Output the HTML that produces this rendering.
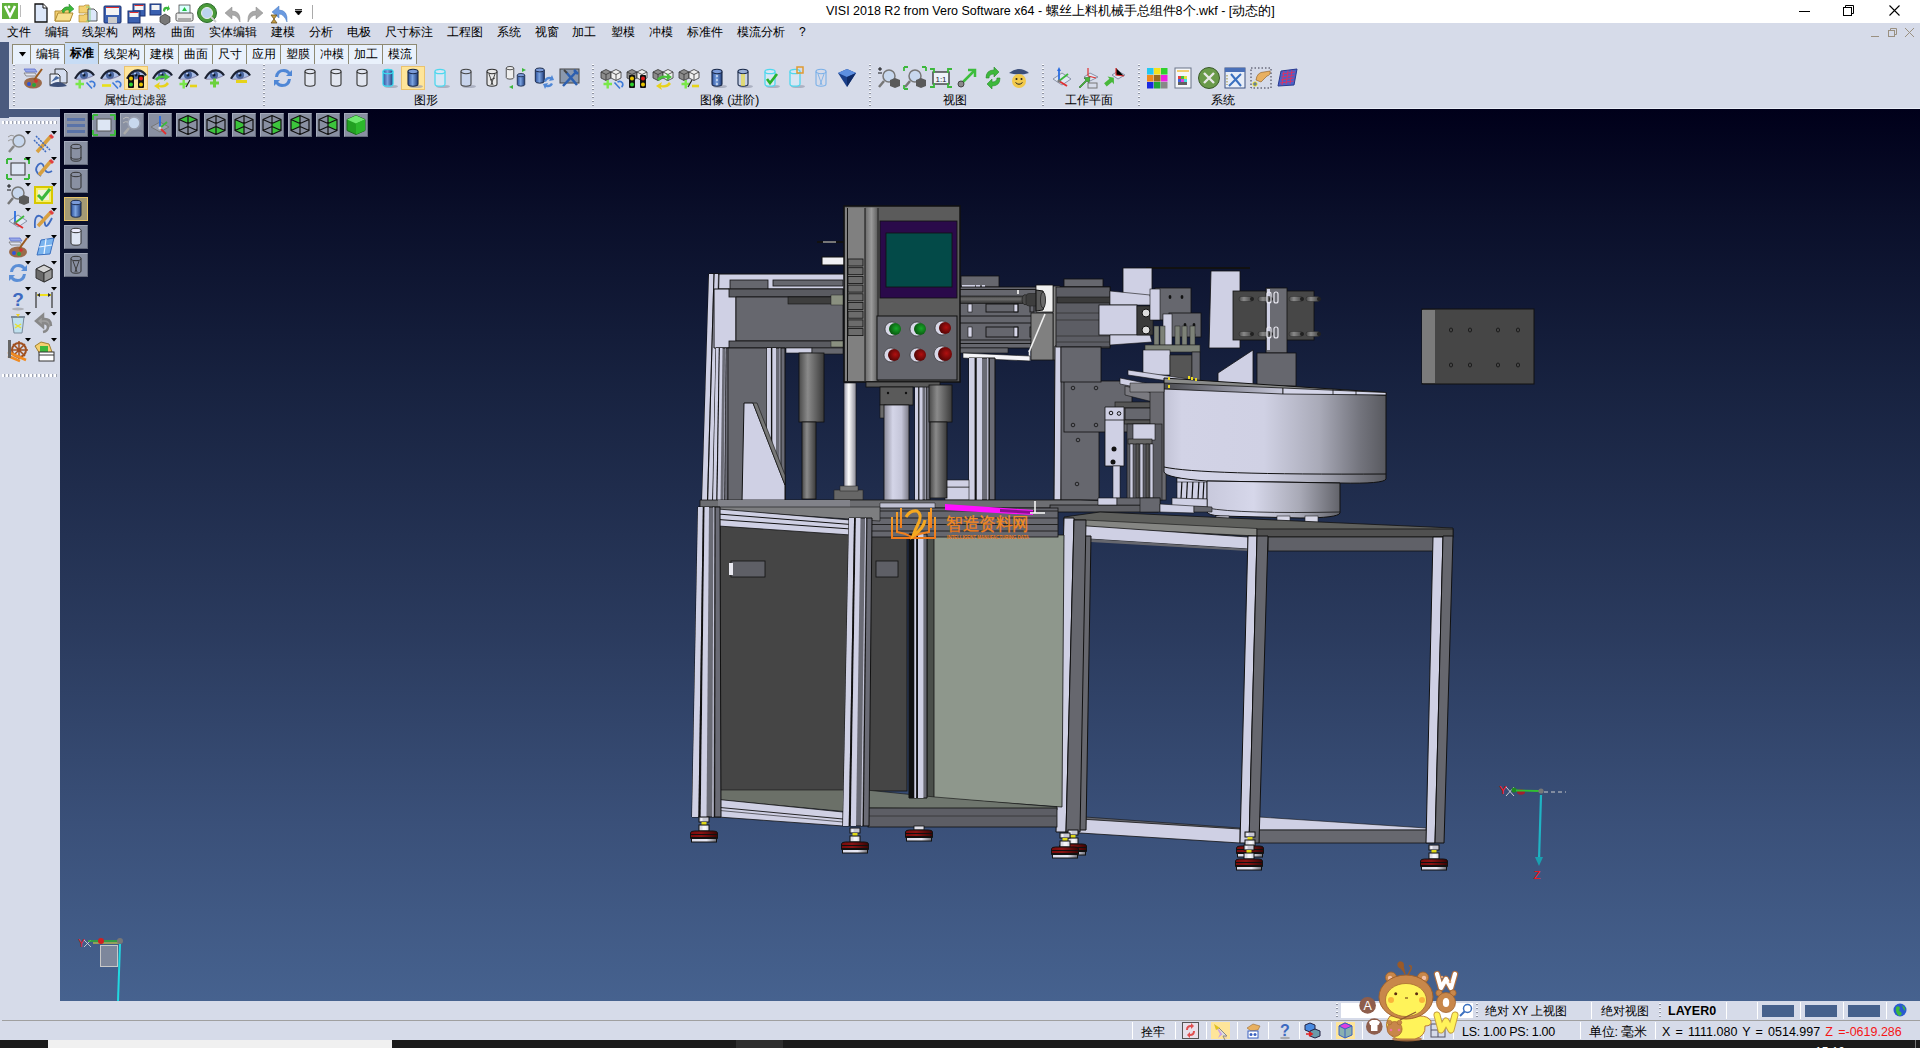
<!DOCTYPE html><html><head><meta charset="utf-8"><style>
*{box-sizing:border-box;margin:0;padding:0}
html,body{width:1920px;height:1048px;overflow:hidden;background:#d6dbe9;font-family:"Liberation Sans",sans-serif;font-size:12px;color:#000}
.a{position:absolute}
.m{position:absolute;top:24px;font-size:12px;line-height:16px;white-space:nowrap}
.tab{position:absolute;top:44px;height:20px;border:1px solid #8e8a73;border-bottom:none;border-left:none;background:#e9f1fc;font-size:12px;line-height:19px;text-align:center;white-space:nowrap}
.dsep{position:absolute;width:2px;background-image:linear-gradient(#fafbfd 0,#fafbfd 1.5px,#8d92a0 1.5px,#8d92a0 2.5px,transparent 2.5px);background-size:2px 4px}
.lbl{position:absolute;top:93px;font-size:12px;line-height:14px;white-space:nowrap}
.st{position:absolute;font-size:12px;line-height:16px;white-space:nowrap}
.ss{position:absolute;width:1px;height:17px;background:#a3a8b4;border-right:1px solid #fff}
svg{position:absolute;overflow:visible}
</style></head><body><div class="a" style="left:0;top:0;width:1920px;height:23px;background:#fff"></div><div class="a" style="left:0;top:42px;width:9px;height:76px;background:#4a5a7e"></div><div class="a" style="left:0;top:109px;width:60px;height:8px;background:#4a5a7e"></div><div class="a" style="left:60px;top:109px;width:1860px;height:892px;background:linear-gradient(#00001a 0%,#0a0f2a 12%,#182341 32%,#2a3a5d 58%,#3a5079 80%,#46628f 100%)"></div><div class="a" style="left:0;top:1040px;width:1920px;height:8px;background:#1b1b1b"></div><div class="a" style="left:48px;top:1040px;width:344px;height:8px;background:#f0f0f0"></div><div class="a" style="left:736px;top:1040px;width:47px;height:8px;background:#2e2e2e"></div><div class="a" style="left:1800px;top:1040px;width:120px;height:8px;overflow:hidden"><div class="a" style="left:15px;top:5px;font-size:12px;line-height:14px;color:#fff">15:10</div><div class="a" style="left:115px;top:0;width:1px;height:8px;background:#777"></div></div><div class="a" style="left:2px;top:1020px;width:1918px;height:1px;background:#a0a0a0"></div><div class="a" style="left:0;top:0;width:1920px;height:23px;"><svg style="left:2px;top:3px" width="16" height="16" viewBox="0 0 16 16"><rect width="16" height="16" fill="#5fb13a"/><path d="M3 3 L8 13 L13 3" stroke="#fff" stroke-width="2.6" fill="none"/><circle cx="7" cy="4" r="1.4" fill="#fff"/></svg><div class="a" style="left:20px;top:5px;width:1px;height:12px;background:#bbb"></div><div class="a" style="left:312px;top:5px;width:1px;height:14px;background:#aaa"></div><svg style="left:32px;top:3px" width="22" height="22" viewBox="0 0 22 22"><path d="M3 1 H11 L15 5 V19 H3Z" fill="#dde8fa" stroke="#111" stroke-width="1.3"/><path d="M11 1 V5 H15" fill="#fff" stroke="#111"/></svg><svg style="left:54px;top:3px" width="22" height="22" viewBox="0 0 22 22"><path d="M1 8 H7 L9 6 H16 V18 H1Z" fill="#f4d070" stroke="#b08a30"/><path d="M1 18 L4 10 H19 L16 18Z" fill="#f8e090" stroke="#b08a30"/><path d="M8 9 Q9 3 15 4 L15 1 L20 6 L15 10 V7 Q11 6 10 10Z" fill="#3cb83c" stroke="#2a7a2a" stroke-width=".5"/></svg><svg style="left:78px;top:3px" width="22" height="22" viewBox="0 0 22 22"><path d="M1 3 H6 L7 2 H11 V10 H1Z" fill="#f4d070" stroke="#b08a30" stroke-width=".7"/><path d="M1 12 H6 L7 11 H11 V19 H1Z" fill="#f4d070" stroke="#b08a30" stroke-width=".7"/><path d="M10 6 H16 L19 9 V18 H10Z" fill="#dde8fa" stroke="#333" stroke-width=".8"/><path d="M8 4 H12 V18 H8" stroke="#7ad07a" fill="none" stroke-width=".8"/></svg><svg style="left:103px;top:3px" width="22" height="22" viewBox="0 0 22 22"><rect x="1" y="3" width="17" height="17" rx="1" fill="#3a60b0" stroke="#1a3070"/><rect x="3" y="4" width="13" height="8" fill="#f4f4f4"/><path d="M3 4.5 H16" stroke="#e03030"/><rect x="5" y="14" width="9" height="6" fill="#ccc"/></svg><svg style="left:127px;top:3px" width="22" height="22" viewBox="0 0 22 22"><rect x="6" y="1" width="12" height="12" fill="#3a60b0" stroke="#1a3070"/><rect x="7.5" y="2" width="9" height="5" fill="#f4f4f4"/><rect x="1" y="8" width="12" height="12" fill="#3a60b0" stroke="#1a3070"/><rect x="2.5" y="9" width="9" height="5" fill="#f4f4f4"/><path d="M2.5 9.5 H11.5 M7.5 2.5 H16.5" stroke="#e03030"/></svg><svg style="left:149px;top:3px" width="22" height="22" viewBox="0 0 22 22"><rect x="1" y="1" width="11" height="11" fill="#3a60b0" stroke="#1a3070"/><rect x="2.5" y="2" width="8" height="5" fill="#f4f4f4"/><path d="M11 14 L16 11 L21 14 V19 L16 22 L11 19Z" fill="#777" stroke="#333" stroke-width=".7"/><path d="M14 8 Q14 3 19 4 L19 2 L21 6 L18 8 V6 Q16 6 16 9Z" fill="#3cb83c"/></svg><svg style="left:175px;top:3px" width="22" height="22" viewBox="0 0 22 22"><rect x="4" y="2" width="11" height="9" fill="#dff" stroke="#333" stroke-width=".7"/><path d="M7 8 L9.5 4 L12 8Z" fill="#20c040"/><rect x="1" y="10" width="17" height="8" rx="1.5" fill="#e8e8e8" stroke="#555"/><rect x="3" y="15" width="13" height="3" fill="#aaa"/></svg><svg style="left:197px;top:3px" width="22" height="22" viewBox="0 0 22 22"><circle cx="10" cy="10" r="9.5" fill="#4a9a3a" stroke="#2a6a2a"/><circle cx="10" cy="10" r="5.5" fill="#bcd4ee" stroke="#eee"/><path d="M14 14 L19 19" stroke="#ccc" stroke-width="2"/></svg><svg style="left:224px;top:3px" width="22" height="22" viewBox="0 0 22 22"><path d="M16 19 Q17 8 8 8 V4 L1 10 L8 16 V12 Q13 12 16 19Z" fill="#a8a8a8" stroke="#888" stroke-width=".5"/></svg><svg style="left:247px;top:3px" width="22" height="22" viewBox="0 0 22 22"><path d="M1 19 Q0 8 9 8 V4 L16 10 L9 16 V12 Q4 12 1 19Z" fill="#a8a8a8" stroke="#888" stroke-width=".5"/></svg><svg style="left:269px;top:3px" width="22" height="22" viewBox="0 0 22 22"><path d="M18 19 Q19 7 10 7 V3 L3 9 L10 15 V11 Q15 11 18 19Z" fill="#6a9ae0" stroke="#4a7ac0" stroke-width=".5"/><path d="M2 12 H8 L5 16 L8 20 H2 L5 16Z" fill="#c8a040" stroke="#6a5020" stroke-width=".8"/></svg><svg style="left:295px;top:9px" width="8" height="7"><path d="M0 .5 H7 M0 2 H7 L3.5 6Z" fill="#000" stroke="#000" stroke-width=".8"/></svg><div class="a" style="left:826px;top:4px;font-size:12.5px;line-height:15px;white-space:nowrap;color:#000">VISI 2018 R2 from Vero Software x64 - 螺丝上料机械手总组件8个.wkf - [动态的]</div><svg style="left:1799px;top:6px" width="12" height="12"><line x1="0" y1="5.5" x2="11" y2="5.5" stroke="#000" stroke-width="1"/></svg><svg style="left:1843px;top:5px" width="12" height="12"><rect x="0.5" y="2.5" width="8" height="8" fill="none" stroke="#000"/><path d="M2.5 2.5 V0.5 H10.5 V8.5 H8.5" fill="none" stroke="#000"/></svg><svg style="left:1889px;top:5px" width="12" height="12"><path d="M0.5 0.5 L10.5 10.5 M10.5 0.5 L0.5 10.5" stroke="#000" stroke-width="1.1"/></svg></div><div class="m" style="left:7px">文件</div><div class="m" style="left:45px">编辑</div><div class="m" style="left:82px">线架构</div><div class="m" style="left:132px">网格</div><div class="m" style="left:171px">曲面</div><div class="m" style="left:209px">实体编辑</div><div class="m" style="left:271px">建模</div><div class="m" style="left:309px">分析</div><div class="m" style="left:347px">电极</div><div class="m" style="left:385px">尺寸标注</div><div class="m" style="left:447px">工程图</div><div class="m" style="left:497px">系统</div><div class="m" style="left:535px">视窗</div><div class="m" style="left:572px">加工</div><div class="m" style="left:611px">塑模</div><div class="m" style="left:649px">冲模</div><div class="m" style="left:687px">标准件</div><div class="m" style="left:737px">模流分析</div><div class="m" style="left:799px">?</div><svg style="left:1869px;top:27px" width="50" height="12"><line x1="2" y1="9.5" x2="10" y2="9.5" stroke="#9a9080"/><rect x="19.5" y="3.5" width="6" height="6" fill="none" stroke="#9a9080"/><path d="M21.5 3.5 V1.5 H27.5 V7.5 H25.5" fill="none" stroke="#9a9080"/><path d="M36 1 L45 10 M45 1 L36 10" stroke="#9a9080"/></svg><div class="a" style="left:12px;top:44px;width:1px;height:20px;background:#8e8a73"></div><div class="tab" style="left:13px;width:18px"><svg style="left:6px;top:7px" width="8" height="5"><path d="M0 0 H7 L3.5 4.5Z" fill="#000"/></svg></div><div class="tab" style="left:31px;width:34px">编辑</div><div class="tab" style="left:65px;width:34px;top:42px;height:22px;background:#c7dcf5;font-weight:bold;line-height:21px">标准</div><div class="tab" style="left:99px;width:46px">线架构</div><div class="tab" style="left:145px;width:34px">建模</div><div class="tab" style="left:179px;width:34px">曲面</div><div class="tab" style="left:213px;width:34px">尺寸</div><div class="tab" style="left:247px;width:34px">应用</div><div class="tab" style="left:281px;width:34px">塑膜</div><div class="tab" style="left:315px;width:34px">冲模</div><div class="tab" style="left:349px;width:34px">加工</div><div class="tab" style="left:383px;width:34px">模流</div><div class="dsep" style="left:13px;top:64px;height:44px"></div><div class="dsep" style="left:263px;top:64px;height:44px"></div><div class="dsep" style="left:592px;top:64px;height:44px"></div><div class="dsep" style="left:869px;top:64px;height:44px"></div><div class="dsep" style="left:1042px;top:64px;height:44px"></div><div class="dsep" style="left:1138px;top:64px;height:44px"></div><div class="lbl" style="left:104px">属性/过滤器</div><div class="lbl" style="left:414px">图形</div><div class="lbl" style="left:700px">图像 (进阶)</div><div class="lbl" style="left:943px">视图</div><div class="lbl" style="left:1065px">工作平面</div><div class="lbl" style="left:1211px">系统</div><div class="a" style="left:9px;top:108px;width:1911px;height:1px;background:#eaeef8"></div><div class="a" style="left:124px;top:66px;width:24px;height:24px;background:#fee59a;border:1px solid #ebc36e"></div><div class="a" style="left:401px;top:66px;width:24px;height:24px;background:#fee59a;border:1px solid #ebc36e"></div><svg style="left:21px;top:66px" width="24" height="24" viewBox="0 0 24 24"><path d="M3 3 H14 L16 6 H5Z" fill="#98a9e8" stroke="#5d6fd0" stroke-width=".8"/><path d="M3 7 H14 L16 10 H5Z" fill="#dfe3f0" stroke="#777" stroke-width=".8"/><ellipse cx="12" cy="17" rx="9" ry="5.5" fill="#9a6a4a"/><circle cx="8" cy="18" r="2" fill="#2f55d8"/><circle cx="13" cy="19" r="2" fill="#28a838"/><circle cx="15" cy="15" r="1.8" fill="#d83030"/><path d="M13 14 L21 3" stroke="#9a5a20" stroke-width="2"/></svg><svg style="left:46px;top:66px" width="24" height="24" viewBox="0 0 24 24"><path d="M9 3 H18 L21 6 V17 H9Z" fill="#d5def0" stroke="#333" stroke-width="1"/><path d="M4 8 H12 L14 10 V19 H4Z" fill="#e5ebf7" stroke="#333" stroke-width="1"/><path d="M5 16 L10 10 L14 12" fill="#4a6aa0"/><path d="M3 20 Q12 12 21 20 Q12 22 3 20Z" fill="#3b4e78"/></svg><svg style="left:72px;top:66px" width="24" height="24" viewBox="0 0 24 24"><path d="M3.5 13 Q8 5 14 5 Q19 5.5 21.5 9.5 Q18 13 12 13.5Z" fill="#a8bde6"/><circle cx="12" cy="9" r="4" fill="#4a66a0"/><circle cx="12" cy="9" r="1.5" fill="#0e1a30"/><circle cx="11" cy="7.5" r=".9" fill="#cfe0ff"/><path d="M3 12.8 Q7.5 4 14 4.3 Q19.5 4.8 22 9.5" stroke="#1c2232" stroke-width="2.2" fill="none"/><path d="M4 13.3 Q12 14.5 21 10" stroke="#7a6a8a" stroke-width=".6" fill="none"/><path d="M3.5 18 H12 M7.7 14 V22.5" stroke="#7ae84a" stroke-width="2.4"/><path d="M14.5 16.5 L20 22.5" stroke="#3d7ad8" stroke-width="1.6"/><path d="M17.5 16 Q20.5 14.5 22.5 17 Q23.5 19.5 21.5 21" stroke="#3d7ad8" stroke-width="1.6" fill="none"/></svg><svg style="left:98px;top:66px" width="24" height="24" viewBox="0 0 24 24"><path d="M3.5 13 Q8 5 14 5 Q19 5.5 21.5 9.5 Q18 13 12 13.5Z" fill="#a8bde6"/><circle cx="12" cy="9" r="4" fill="#4a66a0"/><circle cx="12" cy="9" r="1.5" fill="#0e1a30"/><circle cx="11" cy="7.5" r=".9" fill="#cfe0ff"/><path d="M3 12.8 Q7.5 4 14 4.3 Q19.5 4.8 22 9.5" stroke="#1c2232" stroke-width="2.2" fill="none"/><path d="M4 13.3 Q12 14.5 21 10" stroke="#7a6a8a" stroke-width=".6" fill="none"/><path d="M4 19.5 H13" stroke="#e8e01a" stroke-width="2.6"/><path d="M14.5 16.5 L20 22.5" stroke="#3d7ad8" stroke-width="1.6"/><path d="M17.5 16 Q20.5 14.5 22.5 17 Q23.5 19.5 21.5 21" stroke="#3d7ad8" stroke-width="1.6" fill="none"/></svg><svg style="left:124px;top:66px" width="24" height="24" viewBox="0 0 24 24"><path d="M3.5 13 Q8 5 14 5 Q19 5.5 21.5 9.5 Q18 13 12 13.5Z" fill="#a8bde6"/><circle cx="12" cy="9" r="4" fill="#4a66a0"/><circle cx="12" cy="9" r="1.5" fill="#0e1a30"/><circle cx="11" cy="7.5" r=".9" fill="#cfe0ff"/><path d="M3 12.8 Q7.5 4 14 4.3 Q19.5 4.8 22 9.5" stroke="#1c2232" stroke-width="2.2" fill="none"/><path d="M4 13.3 Q12 14.5 21 10" stroke="#7a6a8a" stroke-width=".6" fill="none"/><rect x="4" y="9" width="6" height="13" rx="1" fill="#111"/><rect x="14" y="9" width="6" height="13" rx="1" fill="#111"/><circle cx="7" cy="12.5" r="2" fill="#e8c400"/><circle cx="7" cy="18.5" r="2" fill="#2fd12c"/><circle cx="17" cy="12.5" r="2" fill="#e21a1a"/><circle cx="17" cy="18.5" r="2" fill="#e8c400"/></svg><svg style="left:150px;top:66px" width="24" height="24" viewBox="0 0 24 24"><path d="M3.5 13 Q8 5 14 5 Q19 5.5 21.5 9.5 Q18 13 12 13.5Z" fill="#a8bde6"/><circle cx="12" cy="9" r="4" fill="#4a66a0"/><circle cx="12" cy="9" r="1.5" fill="#0e1a30"/><circle cx="11" cy="7.5" r=".9" fill="#cfe0ff"/><path d="M3 12.8 Q7.5 4 14 4.3 Q19.5 4.8 22 9.5" stroke="#1c2232" stroke-width="2.2" fill="none"/><path d="M4 13.3 Q12 14.5 21 10" stroke="#7a6a8a" stroke-width=".6" fill="none"/><path d="M5 13 Q9 8 15 10 L14 7 L20 11 L14 15 L15 12 Q10 11 7 15Z" fill="#49c23a"/><path d="M19 18 Q15 23 9 21 L10 24 L4 20 L10 16 L9 19 Q14 20 17 16Z" fill="#e8d21c"/></svg><svg style="left:176px;top:66px" width="24" height="24" viewBox="0 0 24 24"><path d="M3.5 13 Q8 5 14 5 Q19 5.5 21.5 9.5 Q18 13 12 13.5Z" fill="#a8bde6"/><circle cx="12" cy="9" r="4" fill="#4a66a0"/><circle cx="12" cy="9" r="1.5" fill="#0e1a30"/><circle cx="11" cy="7.5" r=".9" fill="#cfe0ff"/><path d="M3 12.8 Q7.5 4 14 4.3 Q19.5 4.8 22 9.5" stroke="#1c2232" stroke-width="2.2" fill="none"/><path d="M4 13.3 Q12 14.5 21 10" stroke="#7a6a8a" stroke-width=".6" fill="none"/><path d="M3.5 18 H12 M7.7 14 V22.5" stroke="#7ae84a" stroke-width="2.4"/><path d="M10 21 L14 14" stroke="#222" stroke-width="1.2"/><path d="M14 20 H21" stroke="#e6d31a" stroke-width="2.6"/></svg><svg style="left:202px;top:66px" width="24" height="24" viewBox="0 0 24 24"><path d="M3.5 13 Q8 5 14 5 Q19 5.5 21.5 9.5 Q18 13 12 13.5Z" fill="#a8bde6"/><circle cx="12" cy="9" r="4" fill="#4a66a0"/><circle cx="12" cy="9" r="1.5" fill="#0e1a30"/><circle cx="11" cy="7.5" r=".9" fill="#cfe0ff"/><path d="M3 12.8 Q7.5 4 14 4.3 Q19.5 4.8 22 9.5" stroke="#1c2232" stroke-width="2.2" fill="none"/><path d="M4 13.3 Q12 14.5 21 10" stroke="#7a6a8a" stroke-width=".6" fill="none"/><path d="M8 17 H17 M12.5 12.5 V21.5" stroke="#6cd13c" stroke-width="3"/></svg><svg style="left:228px;top:66px" width="24" height="24" viewBox="0 0 24 24"><path d="M3.5 13 Q8 5 14 5 Q19 5.5 21.5 9.5 Q18 13 12 13.5Z" fill="#a8bde6"/><circle cx="12" cy="9" r="4" fill="#4a66a0"/><circle cx="12" cy="9" r="1.5" fill="#0e1a30"/><circle cx="11" cy="7.5" r=".9" fill="#cfe0ff"/><path d="M3 12.8 Q7.5 4 14 4.3 Q19.5 4.8 22 9.5" stroke="#1c2232" stroke-width="2.2" fill="none"/><path d="M4 13.3 Q12 14.5 21 10" stroke="#7a6a8a" stroke-width=".6" fill="none"/><path d="M8 15.5 H19" stroke="#e6d31a" stroke-width="3"/></svg><svg style="left:271px;top:66px" width="24" height="24" viewBox="0 0 24 24"><path d="M4 11 Q5 3 13 3 Q17 3 19 6 L21 4 V10 H15 L17 8 Q15 6 12 6 Q8 6 7 11Z" fill="#4f87d6"/><path d="M20 13 Q19 21 11 21 Q7 21 5 18 L3 20 V14 H9 L7 16 Q9 18 12 18 Q16 18 17 13Z" fill="#4f87d6"/></svg><svg style="left:298px;top:66px" width="24" height="24" viewBox="0 0 24 24"><path d="M7 5.5 V18 A5 2.2 0 0 0 17 18 V5.5" fill="#e2e6f0" stroke="#333" stroke-width="1.1"/><ellipse cx="12" cy="5.5" rx="5" ry="2.2" fill="#e2e6f0" stroke="#333" stroke-width="1.1"/></svg><svg style="left:324px;top:66px" width="24" height="24" viewBox="0 0 24 24"><path d="M7 5.5 V18 A5 2.2 0 0 0 17 18 V5.5" fill="#e2e6f0" stroke="#333" stroke-width="1.1"/><ellipse cx="12" cy="5.5" rx="5" ry="2.2" fill="#e2e6f0" stroke="#333" stroke-width="1.1"/></svg><svg style="left:350px;top:66px" width="24" height="24" viewBox="0 0 24 24"><path d="M7 5.5 V18 A5 2.2 0 0 0 17 18 V5.5" fill="#e2e6f0" stroke="#333" stroke-width="1.1"/><ellipse cx="12" cy="5.5" rx="5" ry="2.2" fill="#e2e6f0" stroke="#333" stroke-width="1.1"/></svg><svg style="left:376px;top:66px" width="24" height="24" viewBox="0 0 24 24"><defs><linearGradient id="bc" x1="0" x2="1"><stop offset="0" stop-color="#2b4f9a"/><stop offset=".45" stop-color="#7ba3e0"/><stop offset="1" stop-color="#1e3b7a"/></linearGradient></defs><ellipse cx="15" cy="20.5" rx="7" ry="1.6" fill="#9aa0b0" opacity=".7"/><path d="M7 5.5 V18 A5 2.2 0 0 0 17 18 V5.5" fill="url(#bc)" stroke="#3ad8ee" stroke-width="1.3"/><ellipse cx="12" cy="5.5" rx="5" ry="2.2" fill="url(#bc)" stroke="#3ad8ee" stroke-width="1.3"/></svg><svg style="left:401px;top:66px" width="24" height="24" viewBox="0 0 24 24"><defs><linearGradient id="bc" x1="0" x2="1"><stop offset="0" stop-color="#2b4f9a"/><stop offset=".45" stop-color="#7ba3e0"/><stop offset="1" stop-color="#1e3b7a"/></linearGradient></defs><ellipse cx="15" cy="20.5" rx="7" ry="1.6" fill="#9aa0b0" opacity=".7"/><path d="M7 5.5 V18 A5 2.2 0 0 0 17 18 V5.5" fill="url(#bc)" stroke="#1b2a4a" stroke-width="1.1"/><ellipse cx="12" cy="5.5" rx="5" ry="2.2" fill="#7a9ad8" stroke="#1b2a4a" stroke-width="1.1"/></svg><svg style="left:428px;top:66px" width="24" height="24" viewBox="0 0 24 24"><ellipse cx="15" cy="20.5" rx="7" ry="1.6" fill="#9aa0b0" opacity=".7"/><path d="M7 5.5 V18 A5 2.2 0 0 0 17 18 V5.5" fill="#d8e6f4" stroke="#4fd8ee" stroke-width="1.3"/><ellipse cx="12" cy="5.5" rx="5" ry="2.2" fill="#d8e6f4" stroke="#4fd8ee" stroke-width="1.3"/></svg><svg style="left:454px;top:66px" width="24" height="24" viewBox="0 0 24 24"><ellipse cx="15" cy="20.5" rx="7" ry="1.6" fill="#9aa0b0" opacity=".7"/><path d="M7 5.5 V18 A5 2.2 0 0 0 17 18 V5.5" fill="#c8d4ec" stroke="#444" stroke-width="1.1"/><ellipse cx="12" cy="5.5" rx="5" ry="2.2" fill="#c8d4ec" stroke="#444" stroke-width="1.1"/></svg><svg style="left:480px;top:66px" width="24" height="24" viewBox="0 0 24 24"><path d="M7 5.5 V18 A5 2.2 0 0 0 17 18 V5.5" fill="#e8e8e8" stroke="#333" stroke-width="1.1"/><ellipse cx="12" cy="5.5" rx="5" ry="2.2" fill="#e8e8e8" stroke="#333" stroke-width="1.1"/><path d="M9 8 L13 19 M15 8 L11 19 M10 14 L15 12" stroke="#333" stroke-width=".9"/></svg><svg style="left:505px;top:66px" width="24" height="24" viewBox="0 0 24 24"><g transform="translate(-4,-2) scale(.75)"><path d="M7 5.5 V18 A5 2.2 0 0 0 17 18 V5.5" fill="#eee" stroke="#333" stroke-width="1.1"/><ellipse cx="12" cy="5.5" rx="5" ry="2.2" fill="#eee" stroke="#333" stroke-width="1.1"/></g><defs><linearGradient id="bc" x1="0" x2="1"><stop offset="0" stop-color="#2b4f9a"/><stop offset=".45" stop-color="#7ba3e0"/><stop offset="1" stop-color="#1e3b7a"/></linearGradient></defs><g transform="translate(7,5) scale(.75)"><path d="M7 5.5 V18 A5 2.2 0 0 0 17 18 V5.5" fill="url(#bc)" stroke="#1b2a4a" stroke-width="1.1"/><ellipse cx="12" cy="5.5" rx="5" ry="2.2" fill="#7a9ad8" stroke="#1b2a4a" stroke-width="1.1"/></g><path d="M17 2 L21 4 L17 6Z M4 21 L8 19 V23Z" fill="#3cb83c"/></svg><svg style="left:532px;top:66px" width="24" height="24" viewBox="0 0 24 24"><defs><linearGradient id="bc" x1="0" x2="1"><stop offset="0" stop-color="#2b4f9a"/><stop offset=".45" stop-color="#7ba3e0"/><stop offset="1" stop-color="#1e3b7a"/></linearGradient></defs><g transform="translate(-3,-1) scale(.9)"><path d="M7 5.5 V18 A5 2.2 0 0 0 17 18 V5.5" fill="url(#bc)" stroke="#1b2a4a" stroke-width="1.1"/><ellipse cx="12" cy="5.5" rx="5" ry="2.2" fill="#7a9ad8" stroke="#1b2a4a" stroke-width="1.1"/></g><path d="M12 15 Q14 10 19 11 L20 9 L22 14 L17 15 L18 13 Q15 13 14 16Z M21 18 Q19 22 14 21 L13 23 L11 18 L16 17 L15 19 Q18 19 19 17Z" fill="#4f87d6"/></svg><svg style="left:558px;top:66px" width="24" height="24" viewBox="0 0 24 24"><rect x="2" y="3" width="19" height="14" fill="#8a98ae" stroke="#444"/><path d="M5 20 L18 6 M16 4 L20 8 M8 6 L19 19" stroke="#2c5fb0" stroke-width="2.5"/><path d="M6 4 L9 7" stroke="#444" stroke-width="2"/></svg><svg style="left:600px;top:66px" width="24" height="24" viewBox="0 0 24 24"><path d="M1 6 L6 3.5 L11 6 V12 L6 14.5 L1 12Z" fill="#8c8c8c" stroke="#333" stroke-width=".8"/><path d="M11 6 L16 3.5 L21 6 V12 L16 14.5 L11 12Z" fill="#f0f0f0" stroke="#333" stroke-width=".8"/><path d="M1 6 L6 8.5 L11 6 M6 8.5 V14.5 M11 6 L16 8.5 L21 6 M16 8.5 V14.5" stroke="#333" stroke-width=".8" fill="none"/><path d="M3.5 18 H12 M7.7 14 V22.5" stroke="#7ae84a" stroke-width="2.4"/><path d="M14.5 16.5 L20 22.5" stroke="#3d7ad8" stroke-width="1.6"/><path d="M17.5 16 Q20.5 14.5 22.5 17 Q23.5 19.5 21.5 21" stroke="#3d7ad8" stroke-width="1.6" fill="none"/></svg><svg style="left:626px;top:66px" width="24" height="24" viewBox="0 0 24 24"><path d="M1 6 L6 3.5 L11 6 V12 L6 14.5 L1 12Z" fill="#8c8c8c" stroke="#333" stroke-width=".8"/><path d="M11 6 L16 3.5 L21 6 V12 L16 14.5 L11 12Z" fill="#f0f0f0" stroke="#333" stroke-width=".8"/><path d="M1 6 L6 8.5 L11 6 M6 8.5 V14.5 M11 6 L16 8.5 L21 6 M16 8.5 V14.5" stroke="#333" stroke-width=".8" fill="none"/><rect x="3" y="9" width="6" height="13" rx="1" fill="#111"/><rect x="14" y="9" width="6" height="13" rx="1" fill="#111"/><circle cx="6" cy="12.5" r="2" fill="#e8c400"/><circle cx="6" cy="18.5" r="2" fill="#2fd12c"/><circle cx="17" cy="12.5" r="2" fill="#e21a1a"/><circle cx="17" cy="18.5" r="2" fill="#e8c400"/></svg><svg style="left:652px;top:66px" width="24" height="24" viewBox="0 0 24 24"><path d="M1 6 L6 3.5 L11 6 V12 L6 14.5 L1 12Z" fill="#8c8c8c" stroke="#333" stroke-width=".8"/><path d="M11 6 L16 3.5 L21 6 V12 L16 14.5 L11 12Z" fill="#f0f0f0" stroke="#333" stroke-width=".8"/><path d="M1 6 L6 8.5 L11 6 M6 8.5 V14.5 M11 6 L16 8.5 L21 6 M16 8.5 V14.5" stroke="#333" stroke-width=".8" fill="none"/><path d="M5 13 Q9 8 15 10 L14 7 L20 11 L14 15 L15 12 Q10 11 7 15Z" fill="#49c23a"/><path d="M19 18 Q15 23 9 21 L10 24 L4 20 L10 16 L9 19 Q14 20 17 16Z" fill="#e8d21c"/></svg><svg style="left:678px;top:66px" width="24" height="24" viewBox="0 0 24 24"><path d="M1 6 L6 3.5 L11 6 V12 L6 14.5 L1 12Z" fill="#8c8c8c" stroke="#333" stroke-width=".8"/><path d="M11 6 L16 3.5 L21 6 V12 L16 14.5 L11 12Z" fill="#f0f0f0" stroke="#333" stroke-width=".8"/><path d="M1 6 L6 8.5 L11 6 M6 8.5 V14.5 M11 6 L16 8.5 L21 6 M16 8.5 V14.5" stroke="#333" stroke-width=".8" fill="none"/><path d="M3.5 18 H12 M7.7 14 V22.5" stroke="#7ae84a" stroke-width="2.4"/><path d="M10 21 L14 14" stroke="#222" stroke-width="1.2"/><path d="M14 20 H21" stroke="#e6d31a" stroke-width="2.6"/></svg><svg style="left:705px;top:66px" width="24" height="24" viewBox="0 0 24 24"><defs><linearGradient id="bc" x1="0" x2="1"><stop offset="0" stop-color="#2b4f9a"/><stop offset=".45" stop-color="#7ba3e0"/><stop offset="1" stop-color="#1e3b7a"/></linearGradient></defs><ellipse cx="15" cy="20.5" rx="7" ry="1.6" fill="#9aa0b0" opacity=".7"/><path d="M7 5.5 V18 A5 2.2 0 0 0 17 18 V5.5" fill="url(#bc)" stroke="#1b2a4a" stroke-width="1.1"/><ellipse cx="12" cy="5.5" rx="5" ry="2.2" fill="#7a9ad8" stroke="#1b2a4a" stroke-width="1.1"/><path d="M12 9 V20" stroke="#fff" stroke-dasharray="2 2"/></svg><svg style="left:731px;top:66px" width="24" height="24" viewBox="0 0 24 24"><ellipse cx="15" cy="20.5" rx="7" ry="1.6" fill="#9aa0b0" opacity=".7"/><path d="M7 5.5 V18 A5 2.2 0 0 0 17 18 V5.5" fill="#c8d2e8" stroke="#1b2a4a" stroke-width="1.1"/><ellipse cx="12" cy="5.5" rx="5" ry="2.2" fill="#9ab0d8" stroke="#1b2a4a" stroke-width="1.1"/><path d="M11 8 V20 M13 8 V20" stroke="#f0e030" stroke-width="1.2"/></svg><svg style="left:758px;top:66px" width="24" height="24" viewBox="0 0 24 24"><ellipse cx="15" cy="20.5" rx="7" ry="1.6" fill="#9aa0b0" opacity=".7"/><path d="M7 5.5 V18 A5 2.2 0 0 0 17 18 V5.5" fill="#d8e6f4" stroke="#4fd8ee" stroke-width="1.3"/><ellipse cx="12" cy="5.5" rx="5" ry="2.2" fill="#d8e6f4" stroke="#4fd8ee" stroke-width="1.3"/><path d="M9 13 L12 17 L19 8" stroke="#2ab32a" stroke-width="2.6" fill="none"/></svg><svg style="left:783px;top:66px" width="24" height="24" viewBox="0 0 24 24"><ellipse cx="15" cy="20.5" rx="7" ry="1.6" fill="#9aa0b0" opacity=".7"/><path d="M7 5.5 V18 A5 2.2 0 0 0 17 18 V5.5" fill="#d8e6f4" stroke="#4fd8ee" stroke-width="1.3"/><ellipse cx="12" cy="5.5" rx="5" ry="2.2" fill="#d8e6f4" stroke="#4fd8ee" stroke-width="1.3"/><rect x="14" y="1" width="6" height="6" fill="none" stroke="#e09a30" stroke-width="1.5"/></svg><svg style="left:809px;top:66px" width="24" height="24" viewBox="0 0 24 24"><path d="M7 5.5 V18 A5 2.2 0 0 0 17 18 V5.5" fill="none" stroke="#7ab0e8" stroke-width="1.1"/><ellipse cx="12" cy="5.5" rx="5" ry="2.2" fill="none" stroke="#7ab0e8" stroke-width="1.1"/><path d="M9 8 L13 19 M15 8 L11 19" stroke="#7ab0e8" stroke-width=".9"/></svg><svg style="left:835px;top:66px" width="24" height="24" viewBox="0 0 24 24"><path d="M3 7 L12 3 L21 7 L12 21Z" fill="#1a3f8a"/><path d="M3 7 L12 11 L21 7 L12 3Z" fill="#5d8fe0"/><path d="M12 11 L21 7 L12 21Z" fill="#0e2a66"/></svg><svg style="left:877px;top:66px" width="24" height="24" viewBox="0 0 24 24"><circle cx="12" cy="10" r="6" fill="#c8d8ee" stroke="#777" stroke-width="1.5"/><path d="M7 15 L2 21" stroke="#777" stroke-width="2.5"/><path d="M1 3 H5 M3 1 V5 M1 7 H5" stroke="#000" stroke-width=".9"/><path d="M13 14 L18 12 L23 14 V20 L18 22 L13 20Z" fill="#5a5a5a"/></svg><svg style="left:903px;top:66px" width="24" height="24" viewBox="0 0 24 24"><circle cx="12" cy="10" r="6" fill="#c8d8ee" stroke="#777" stroke-width="1.5"/><path d="M7 15 L2 21" stroke="#777" stroke-width="2.5"/><path d="M13 14 L18 12 L23 14 V20 L18 22 L13 20Z" fill="#5a5a5a"/><path d="M1 1 h4 M1 1 v4 M23 1 h-4 M23 1 v4 M1 23 h4 M1 23 v-4" stroke="#3cb83c" stroke-width="1.8" fill="none"/></svg><svg style="left:929px;top:66px" width="24" height="24" viewBox="0 0 24 24"><rect x="4" y="6" width="16" height="12" fill="#eef2fa" stroke="#222" stroke-width="1.2"/><text x="12" y="15.5" font-size="8" text-anchor="middle" font-family="Liberation Sans" fill="#223">1:1</text><path d="M1 3 h4 v4 M23 3 h-4 v4 M1 21 h4 v-4 M23 21 h-4 v-4" stroke="#3cb83c" stroke-width="1.8" fill="none"/></svg><svg style="left:955px;top:66px" width="24" height="24" viewBox="0 0 24 24"><path d="M6 18 L19 5" stroke="#3cbd3c" stroke-width="2.5"/><path d="M13 4 H20 V11" stroke="#3cbd3c" stroke-width="2.5" fill="none"/><circle cx="6" cy="18" r="3" fill="#8a8a8a" stroke="#444"/></svg><svg style="left:981px;top:66px" width="24" height="24" viewBox="0 0 24 24"><path d="M5 12 Q5 4 13 4 L13 1 L18 6 L13 11 V8 Q8 8 8 12Z M19 12 Q19 20 11 20 L11 23 L6 18 L11 13 V16 Q16 16 16 12Z" fill="#3cb83c" stroke="#2a8a2a" stroke-width=".6"/></svg><svg style="left:1007px;top:66px" width="24" height="24" viewBox="0 0 24 24"><path d="M2 7 Q12 -1 22 7 Q12 10 2 7Z" fill="#3b4e78"/><circle cx="12" cy="15" r="7" fill="#f2c94a"/><circle cx="9.5" cy="13" r="1" fill="#222"/><circle cx="14.5" cy="13" r="1" fill="#222"/><path d="M8.5 16.5 Q12 20 15.5 16.5" stroke="#222" fill="none"/></svg><svg style="left:1050px;top:66px" width="24" height="24" viewBox="0 0 24 24"><path d="M3 13 L12 7 L21 13 L12 19Z" fill="#dfe6f3" stroke="#8a93a8"/><path d="M9 15 V3" stroke="#2b6de0" stroke-width="1.8"/><path d="M7 5 L9 1 L11 5Z" fill="#2b6de0"/><path d="M9 15 L18 8" stroke="#3cb83c" stroke-width="1.8"/><path d="M9 15 L17 20" stroke="#e03030" stroke-width="1.8"/><circle cx="9" cy="15" r="1.6" fill="#777"/></svg><svg style="left:1076px;top:66px" width="24" height="24" viewBox="0 0 24 24"><path d="M8 11 L14 7 L22 11 L14 15Z" fill="#dfe6f3" stroke="#8a93a8"/><path d="M12 2 V10 M12 10 L20 12" stroke="#e03030" stroke-width="1.2"/><path d="M3 21 L10 14 L8 12 L14 11 L13 17 L11 15 L4 22Z" fill="#48b83a" stroke="#2a6a2a" stroke-width=".6"/><rect x="12" y="17" width="9" height="5" fill="none" stroke="#777"/></svg><svg style="left:1102px;top:66px" width="24" height="24" viewBox="0 0 24 24"><path d="M10 9 L16 5 L23 9 L16 13Z" fill="#dfe6f3" stroke="#8a93a8"/><path d="M14 2 V9 L22 10" stroke="#e03030" stroke-width="1.2"/><path d="M2 13 L9 13 L9 10 L13 15 L9 20 L9 17 L2 17Z" fill="#48b83a" transform="rotate(-40 8 15)"/></svg><svg style="left:1145px;top:66px" width="24" height="24" viewBox="0 0 24 24"><rect x="2" y="2" width="6.5" height="6.5" fill="#21c8f0"/><rect x="9" y="2" width="6.5" height="6.5" fill="#f4e21c"/><rect x="16" y="2" width="6.5" height="6.5" fill="#2ed12e"/><rect x="2" y="9" width="6.5" height="6.5" fill="#f08a1c"/><rect x="9" y="9" width="6.5" height="6.5" fill="#9a6a20"/><rect x="16" y="9" width="6.5" height="6.5" fill="#ee22dd"/><rect x="2" y="16" width="6.5" height="6.5" fill="#1a2ae0"/><rect x="9" y="16" width="6.5" height="6.5" fill="#22a838"/><rect x="16" y="16" width="6.5" height="6.5" fill="#888888"/></svg><svg style="left:1171px;top:66px" width="24" height="24" viewBox="0 0 24 24"><rect x="4" y="2" width="16" height="20" fill="#f4f6fa" stroke="#6a7488"/><path d="M6 5 H18" stroke="#f0c040" stroke-width="1.5"/><rect x="7" y="10" width="3" height="3" fill="#e04040"/><rect x="10" y="10" width="3" height="3" fill="#40c040"/><rect x="13" y="10" width="3" height="3" fill="#e0e040"/><rect x="7" y="13" width="3" height="3" fill="#4060e0"/><rect x="10" y="13" width="3" height="3" fill="#e040e0"/><rect x="13" y="13" width="3" height="3" fill="#40e0e0"/><rect x="7" y="16" width="9" height="3" fill="#606060"/></svg><svg style="left:1197px;top:66px" width="24" height="24" viewBox="0 0 24 24"><circle cx="12" cy="12" r="10.5" fill="#6a9a4a" stroke="#3a5a2a"/><path d="M7 17 L17 7 M7 7 L17 17" stroke="#e8e8e8" stroke-width="2.4"/></svg><svg style="left:1223px;top:66px" width="24" height="24" viewBox="0 0 24 24"><rect x="2" y="2" width="20" height="20" fill="#e8eef8" stroke="#3a5080"/><rect x="2" y="2" width="20" height="4" fill="#4a70b8"/><path d="M6 20 L18 8 M8 8 L18 20" stroke="#3a70c0" stroke-width="2"/><path d="M4 9 V19" stroke="#9a8a30" stroke-dasharray="1.5 1.5"/></svg><svg style="left:1249px;top:66px" width="24" height="24" viewBox="0 0 24 24"><path d="M2 2 H22 V22 H2Z" fill="none" stroke="#334" stroke-dasharray="1.5 2"/><path d="M7 14 Q8 6 15 6 L21 5 Q22 9 18 10 L12 16Z" fill="#e8b060" stroke="#8a5a20" stroke-width=".6"/><circle cx="6" cy="18" r="2.5" fill="#f0e020"/><path d="M4 18 H8 M6 16 V20" stroke="#3a60c0"/></svg><svg style="left:1275px;top:66px" width="24" height="24" viewBox="0 0 24 24"><path d="M3 20 L6 5 L22 3 L19 19Z" fill="#4a62c8" stroke="#2a3a90"/><path d="M7 8 L20 6 M6.5 11 L19.5 9 M6 14 L19 12 M5 17 L18.5 15 M9 5 L7 19 M13 4.5 L11 18.5 M17 4 L15 18" stroke="#e03060" stroke-width=".9"/></svg><div class="dsep" style="left:2px;top:121px;width:56px;height:3px;background-image:linear-gradient(90deg,#fff 0,#fff 2px,#9ea3b0 2px,#9ea3b0 3px,transparent 3px);background-size:4px 3px"></div><div class="dsep" style="left:2px;top:374px;width:56px;height:3px;background-image:linear-gradient(90deg,#fff 0,#fff 2px,#9ea3b0 2px,#9ea3b0 3px,transparent 3px);background-size:4px 3px"></div><svg style="left:6px;top:131px" width="24" height="24" viewBox="0 0 24 24"><circle cx="13" cy="10" r="6" fill="#c8d8ee" stroke="#888" stroke-width="1.5"/><path d="M8 15 L3 21" stroke="#888" stroke-width="2.5"/><path d="M2 6 Q5 3 8 5 M2 10 Q4 8 7 9" stroke="#999" fill="none"/></svg><svg style="left:32px;top:131px" width="24" height="24" viewBox="0 0 24 24"><path d="M5 21 L19 5" stroke="#d8a040" stroke-width="3.5"/><path d="M18 4 L21 7" stroke="#e04040" stroke-width="3"/><path d="M4 5 L18 19 M2 9 L14 21" stroke="#3d6ac0" stroke-width="1.5" stroke-dasharray="2 1"/></svg><svg style="left:25px;top:131px" width="7" height="5"><path d="M0 0 H6 L3 3.5Z" fill="#000"/></svg><svg style="left:51px;top:131px" width="7" height="5"><path d="M0 0 H6 L3 3.5Z" fill="#000"/></svg><svg style="left:6px;top:157px" width="24" height="24" viewBox="0 0 24 24"><rect x="5" y="6" width="14" height="12" fill="#dde6f4" stroke="#333"/><path d="M1 2 h5 M1 2 v5 M23 2 h-5 M23 2 v5 M1 22 h5 M1 22 v-5 M23 22 h-5 M23 22 v-5" stroke="#3cb83c" stroke-width="2" fill="none"/></svg><svg style="left:32px;top:157px" width="24" height="24" viewBox="0 0 24 24"><path d="M9 19 Q1 14 6 8 Q10 4 12 10 Q14 18 20 14" stroke="#3d6ac0" stroke-width="1.8" fill="none"/><path d="M7 18 L19 4" stroke="#d8a040" stroke-width="3.5"/><path d="M18 3 L21 6" stroke="#e04040" stroke-width="3"/></svg><svg style="left:25px;top:157px" width="7" height="5"><path d="M0 0 H6 L3 3.5Z" fill="#000"/></svg><svg style="left:51px;top:157px" width="7" height="5"><path d="M0 0 H6 L3 3.5Z" fill="#000"/></svg><svg style="left:6px;top:183px" width="24" height="24" viewBox="0 0 24 24"><circle cx="12" cy="10" r="6" fill="#c8d8ee" stroke="#777" stroke-width="1.5"/><path d="M7 15 L2 21" stroke="#777" stroke-width="2.5"/><path d="M1 3 H5 M3 1 V5 M1 7 H5" stroke="#000" stroke-width=".9"/><path d="M13 14 L18 12 L23 14 V20 L18 22 L13 20Z" fill="#5a5a5a"/></svg><svg style="left:32px;top:183px" width="24" height="24" viewBox="0 0 24 24"><rect x="3" y="4" width="17" height="16" fill="#f6f070" stroke="#d8c800" stroke-width="2"/><rect x="6" y="7" width="11" height="10" fill="#eef4dd"/><path d="M6 12 L10 16 L18 6" stroke="#3cb83c" stroke-width="3" fill="none"/></svg><svg style="left:25px;top:183px" width="7" height="5"><path d="M0 0 H6 L3 3.5Z" fill="#000"/></svg><svg style="left:51px;top:183px" width="7" height="5"><path d="M0 0 H6 L3 3.5Z" fill="#000"/></svg><svg style="left:6px;top:208px" width="24" height="24" viewBox="0 0 24 24"><path d="M3 13 L12 7 L21 13 L12 19Z" fill="#dfe6f3" stroke="#8a93a8"/><path d="M9 15 V3" stroke="#2b6de0" stroke-width="1.8"/><path d="M9 15 L18 8" stroke="#3cb83c" stroke-width="1.8"/><path d="M9 15 L17 20" stroke="#e03030" stroke-width="1.8"/><circle cx="9" cy="15" r="1.6" fill="#777"/></svg><svg style="left:32px;top:208px" width="24" height="24" viewBox="0 0 24 24"><path d="M3 20 Q2 6 8 8 Q12 10 13 16 Q14 22 20 10" stroke="#3d6ac0" stroke-width="1.8" fill="none"/><path d="M6 18 L19 4" stroke="#d8a040" stroke-width="3.5"/><path d="M18 3 L21 6" stroke="#e04040" stroke-width="3"/></svg><svg style="left:25px;top:208px" width="7" height="5"><path d="M0 0 H6 L3 3.5Z" fill="#000"/></svg><svg style="left:51px;top:208px" width="7" height="5"><path d="M0 0 H6 L3 3.5Z" fill="#000"/></svg><svg style="left:6px;top:235px" width="24" height="24" viewBox="0 0 24 24"><path d="M3 3 H14 L16 6 H5Z" fill="#98a9e8" stroke="#5d6fd0" stroke-width=".8"/><path d="M3 7 H14 L16 10 H5Z" fill="#dfe3f0" stroke="#777" stroke-width=".8"/><ellipse cx="12" cy="17" rx="9" ry="5.5" fill="#9a6a4a"/><circle cx="8" cy="18" r="2" fill="#2f55d8"/><circle cx="13" cy="19" r="2" fill="#28a838"/><circle cx="15" cy="15" r="1.8" fill="#d83030"/><path d="M13 14 L21 3" stroke="#9a5a20" stroke-width="2"/></svg><svg style="left:32px;top:235px" width="24" height="24" viewBox="0 0 24 24"><path d="M5 20 L9 5 L22 3 L18 19Z" fill="#7ab4ee" stroke="#3a70c0"/><path d="M7 12 L20 10 M14 4 L12 19" stroke="#eef6ff" stroke-width="1.2"/></svg><svg style="left:25px;top:235px" width="7" height="5"><path d="M0 0 H6 L3 3.5Z" fill="#000"/></svg><svg style="left:51px;top:235px" width="7" height="5"><path d="M0 0 H6 L3 3.5Z" fill="#000"/></svg><svg style="left:6px;top:261px" width="24" height="24" viewBox="0 0 24 24"><path d="M4 11 Q5 3 13 3 Q17 3 19 6 L21 4 V10 H15 L17 8 Q15 6 12 6 Q8 6 7 11Z" fill="#5a8ed6"/><path d="M20 13 Q19 21 11 21 Q7 21 5 18 L3 20 V14 H9 L7 16 Q9 18 12 18 Q16 18 17 13Z" fill="#5a8ed6"/></svg><svg style="left:32px;top:261px" width="24" height="24" viewBox="0 0 24 24"><path d="M4 8 L12 4 L20 8 V17 L12 21 L4 17Z" fill="#6a6a6a" stroke="#333"/><path d="M4 8 L12 12 L20 8 L12 4Z" fill="#d4d4d4" stroke="#333"/><path d="M12 12 V21" stroke="#333"/><path d="M12 12 L20 8 V17 L12 21Z" fill="#9a9a9a" stroke="#333"/></svg><svg style="left:25px;top:261px" width="7" height="5"><path d="M0 0 H6 L3 3.5Z" fill="#000"/></svg><svg style="left:51px;top:261px" width="7" height="5"><path d="M0 0 H6 L3 3.5Z" fill="#000"/></svg><svg style="left:6px;top:287px" width="24" height="24" viewBox="0 0 24 24"><text x="12" y="19" font-size="19" font-weight="bold" text-anchor="middle" font-family="Liberation Sans" fill="#3d6ac0">?</text><ellipse cx="12" cy="22" rx="6" ry="1.5" fill="#888" opacity=".5"/></svg><svg style="left:32px;top:287px" width="24" height="24" viewBox="0 0 24 24"><path d="M4 5 V21 M20 5 V21" stroke="#333" stroke-width="1.2"/><path d="M5 8 H19" stroke="#f0e020" stroke-width="2"/><path d="M5 8 L8 6 V10Z M19 8 L16 6 V10Z" fill="#333"/></svg><svg style="left:25px;top:287px" width="7" height="5"><path d="M0 0 H6 L3 3.5Z" fill="#000"/></svg><svg style="left:51px;top:287px" width="7" height="5"><path d="M0 0 H6 L3 3.5Z" fill="#000"/></svg><svg style="left:6px;top:312px" width="24" height="24" viewBox="0 0 24 24"><path d="M6 5 H18 L16 21 H8Z" fill="#bfe0ee" stroke="#7a8a9a"/><path d="M5 5 H19" stroke="#7a8a9a" stroke-width="2"/><path d="M10 2 L12 5 L14 2Z" fill="#f0d020"/><path d="M9 12 L15 16 M15 12 L9 16" stroke="#e8e030" stroke-width="1.5"/></svg><svg style="left:32px;top:312px" width="24" height="24" viewBox="0 0 24 24"><path d="M19 14 Q19 6 11 7 L11 3 L4 9 L11 15 V11 Q16 11 16 15 Q16 19 11 20" stroke="#888" stroke-width="2.5" fill="#a0a0a0"/></svg><svg style="left:25px;top:312px" width="7" height="5"><path d="M0 0 H6 L3 3.5Z" fill="#000"/></svg><svg style="left:51px;top:312px" width="7" height="5"><path d="M0 0 H6 L3 3.5Z" fill="#000"/></svg><svg style="left:6px;top:338px" width="24" height="24" viewBox="0 0 24 24"><circle cx="13" cy="12" r="7" fill="none" stroke="#a05020" stroke-width="2"/><path d="M13 3 V21 M4 12 H22 M7 6 L19 18 M19 6 L7 18" stroke="#a05020" stroke-width="1.5"/><path d="M2 14 L20 22 M2 18 L14 23" stroke="#f08a20" stroke-width="2.5"/><rect x="2" y="2" width="3" height="18" fill="#666"/></svg><svg style="left:32px;top:338px" width="24" height="24" viewBox="0 0 24 24"><path d="M3 8 L9 4 L17 6 L20 14 L8 16Z" fill="#f4d070" stroke="#a08030"/><rect x="8" y="8" width="8" height="6" fill="#3cb83c"/><rect x="7" y="14" width="15" height="9" fill="#fff" stroke="#333"/><path d="M7 17 H22" stroke="#333"/></svg><svg style="left:25px;top:338px" width="7" height="5"><path d="M0 0 H6 L3 3.5Z" fill="#000"/></svg><svg style="left:51px;top:338px" width="7" height="5"><path d="M0 0 H6 L3 3.5Z" fill="#000"/></svg><div class="a" style="left:64px;top:113px;width:24px;height:24px;background:#8990a2;border-top:1px solid #a5abbb;border-left:1px solid #a5abbb;border-right:1px solid #656b7c;border-bottom:1px solid #656b7c"></div><div class="a" style="left:92px;top:113px;width:24px;height:24px;background:#8990a2;border-top:1px solid #a5abbb;border-left:1px solid #a5abbb;border-right:1px solid #656b7c;border-bottom:1px solid #656b7c"></div><div class="a" style="left:120px;top:113px;width:24px;height:24px;background:#8990a2;border-top:1px solid #a5abbb;border-left:1px solid #a5abbb;border-right:1px solid #656b7c;border-bottom:1px solid #656b7c"></div><div class="a" style="left:148px;top:113px;width:24px;height:24px;background:#8990a2;border-top:1px solid #a5abbb;border-left:1px solid #a5abbb;border-right:1px solid #656b7c;border-bottom:1px solid #656b7c"></div><div class="a" style="left:176px;top:113px;width:24px;height:24px;background:#8990a2;border-top:1px solid #a5abbb;border-left:1px solid #a5abbb;border-right:1px solid #656b7c;border-bottom:1px solid #656b7c"></div><div class="a" style="left:204px;top:113px;width:24px;height:24px;background:#8990a2;border-top:1px solid #a5abbb;border-left:1px solid #a5abbb;border-right:1px solid #656b7c;border-bottom:1px solid #656b7c"></div><div class="a" style="left:232px;top:113px;width:24px;height:24px;background:#8990a2;border-top:1px solid #a5abbb;border-left:1px solid #a5abbb;border-right:1px solid #656b7c;border-bottom:1px solid #656b7c"></div><div class="a" style="left:260px;top:113px;width:24px;height:24px;background:#8990a2;border-top:1px solid #a5abbb;border-left:1px solid #a5abbb;border-right:1px solid #656b7c;border-bottom:1px solid #656b7c"></div><div class="a" style="left:288px;top:113px;width:24px;height:24px;background:#8990a2;border-top:1px solid #a5abbb;border-left:1px solid #a5abbb;border-right:1px solid #656b7c;border-bottom:1px solid #656b7c"></div><div class="a" style="left:316px;top:113px;width:24px;height:24px;background:#8990a2;border-top:1px solid #a5abbb;border-left:1px solid #a5abbb;border-right:1px solid #656b7c;border-bottom:1px solid #656b7c"></div><div class="a" style="left:344px;top:113px;width:24px;height:24px;background:#8990a2;border-top:1px solid #a5abbb;border-left:1px solid #a5abbb;border-right:1px solid #656b7c;border-bottom:1px solid #656b7c"></div><div class="a" style="left:64px;top:141px;width:24px;height:24px;background:#8990a2;border-top:1px solid #a5abbb;border-left:1px solid #a5abbb;border-right:1px solid #656b7c;border-bottom:1px solid #656b7c"></div><div class="a" style="left:64px;top:169px;width:24px;height:24px;background:#8990a2;border-top:1px solid #a5abbb;border-left:1px solid #a5abbb;border-right:1px solid #656b7c;border-bottom:1px solid #656b7c"></div><div class="a" style="left:64px;top:197px;width:24px;height:24px;background:#8990a2;border-top:1px solid #a5abbb;border-left:1px solid #a5abbb;border-right:1px solid #656b7c;border-bottom:1px solid #656b7c;background:#a59a74;border:1px solid #e8c468"></div><div class="a" style="left:64px;top:225px;width:24px;height:24px;background:#8990a2;border-top:1px solid #a5abbb;border-left:1px solid #a5abbb;border-right:1px solid #656b7c;border-bottom:1px solid #656b7c"></div><div class="a" style="left:64px;top:253px;width:24px;height:24px;background:#8990a2;border-top:1px solid #a5abbb;border-left:1px solid #a5abbb;border-right:1px solid #656b7c;border-bottom:1px solid #656b7c"></div><svg style="left:64px;top:113px" width="24" height="24" viewBox="0 0 24 24"><rect x="3" y="5" width="18" height="3" fill="#5a73a8"/><rect x="3" y="11" width="18" height="3" fill="#5a73a8"/><rect x="3" y="17" width="18" height="3" fill="#5a73a8"/></svg><svg style="left:92px;top:113px" width="24" height="24" viewBox="0 0 24 24"><rect x="5" y="6" width="14" height="12" fill="#dde6f4" stroke="#555"/><path d="M1 2 h5 M1 2 v5 M23 2 h-5 M23 2 v5 M1 22 h5 M1 22 v-5 M23 22 h-5 M23 22 v-5" stroke="#3cb83c" stroke-width="2" fill="none"/></svg><svg style="left:120px;top:113px" width="24" height="24" viewBox="0 0 24 24"><circle cx="14" cy="10" r="6" fill="#c8d8ee" stroke="#9aa0b0" stroke-width="1.5"/><path d="M9 15 L4 21" stroke="#aaa" stroke-width="2.5"/><path d="M3 6 Q6 3 9 5 M3 10 Q5 8 8 9" stroke="#bbb" fill="none"/></svg><svg style="left:148px;top:113px" width="24" height="24" viewBox="0 0 24 24"><path d="M3 14 L12 9 L21 14 L12 19Z" fill="#9aa0b0" stroke="#777"/><path d="M12 15 V3" stroke="#2b6de0" stroke-width="1.8"/><path d="M12 15 L19 9" stroke="#3cb83c" stroke-width="1.8"/><path d="M12 15 L18 21" stroke="#e03030" stroke-width="1.8"/><circle cx="12" cy="15" r="1.6" fill="#ddd"/></svg><svg style="left:176px;top:113px" width="24" height="24" viewBox="0 0 24 24"><polygon points="3,6.5 12,2.5 21,6.5 12,10.5" fill="#3cc43c"/><path d="M3 6.5 L12 2.5 L21 6.5 L12 10.5Z M3 17.5 L12 13.5 L21 17.5 L12 21.5Z M3 6.5 V17.5 M12 2.5 V13.5 M21 6.5 V17.5 M12 10.5 V21.5" stroke="#111" stroke-width="1.2" fill="none" stroke-linejoin="round"/></svg><svg style="left:204px;top:113px" width="24" height="24" viewBox="0 0 24 24"><polygon points="3,17.5 12,13.5 21,17.5 12,21.5" fill="#3cc43c"/><path d="M3 6.5 L12 2.5 L21 6.5 L12 10.5Z M3 17.5 L12 13.5 L21 17.5 L12 21.5Z M3 6.5 V17.5 M12 2.5 V13.5 M21 6.5 V17.5 M12 10.5 V21.5" stroke="#111" stroke-width="1.2" fill="none" stroke-linejoin="round"/></svg><svg style="left:232px;top:113px" width="24" height="24" viewBox="0 0 24 24"><polygon points="3,6.5 12,10.5 12,21.5 3,17.5" fill="#3cc43c"/><path d="M3 6.5 L12 2.5 L21 6.5 L12 10.5Z M3 17.5 L12 13.5 L21 17.5 L12 21.5Z M3 6.5 V17.5 M12 2.5 V13.5 M21 6.5 V17.5 M12 10.5 V21.5" stroke="#111" stroke-width="1.2" fill="none" stroke-linejoin="round"/></svg><svg style="left:260px;top:113px" width="24" height="24" viewBox="0 0 24 24"><polygon points="12,10.5 21,6.5 21,17.5 12,21.5" fill="#3cc43c"/><path d="M3 6.5 L12 2.5 L21 6.5 L12 10.5Z M3 17.5 L12 13.5 L21 17.5 L12 21.5Z M3 6.5 V17.5 M12 2.5 V13.5 M21 6.5 V17.5 M12 10.5 V21.5" stroke="#111" stroke-width="1.2" fill="none" stroke-linejoin="round"/></svg><svg style="left:288px;top:113px" width="24" height="24" viewBox="0 0 24 24"><polygon points="3,6.5 12,2.5 12,13.5 3,17.5" fill="#3cc43c"/><path d="M3 6.5 L12 2.5 L21 6.5 L12 10.5Z M3 17.5 L12 13.5 L21 17.5 L12 21.5Z M3 6.5 V17.5 M12 2.5 V13.5 M21 6.5 V17.5 M12 10.5 V21.5" stroke="#111" stroke-width="1.2" fill="none" stroke-linejoin="round"/></svg><svg style="left:316px;top:113px" width="24" height="24" viewBox="0 0 24 24"><polygon points="12,2.5 21,6.5 21,17.5 12,13.5" fill="#3cc43c"/><path d="M3 6.5 L12 2.5 L21 6.5 L12 10.5Z M3 17.5 L12 13.5 L21 17.5 L12 21.5Z M3 6.5 V17.5 M12 2.5 V13.5 M21 6.5 V17.5 M12 10.5 V21.5" stroke="#111" stroke-width="1.2" fill="none" stroke-linejoin="round"/></svg><svg style="left:344px;top:113px" width="24" height="24" viewBox="0 0 24 24"><polygon points="3,6.5 12,2.5 21,6.5 21,17.5 12,21.5 3,17.5" fill="#22a022" stroke="#1a6a1a"/><polygon points="3,6.5 12,2.5 21,6.5 12,10.5" fill="#6ee86e"/><polygon points="12,10.5 21,6.5 21,17.5 12,21.5" fill="#2cb82c"/></svg><svg style="left:64px;top:141px" width="24" height="24" viewBox="0 0 24 24"><path d="M7 5.5 V18 A5 2.2 0 0 0 17 18 V5.5" fill="none" stroke="#333"/><ellipse cx="12" cy="5.5" rx="5" ry="2.2" fill="none" stroke="#333"/><path d="M7 16 A5 2.2 0 0 0 17 16" stroke="#333" fill="none"/></svg><svg style="left:64px;top:169px" width="24" height="24" viewBox="0 0 24 24"><path d="M7 5.5 V18 A5 2.2 0 0 0 17 18 V5.5" fill="none" stroke="#333"/><ellipse cx="12" cy="5.5" rx="5" ry="2.2" fill="none" stroke="#333"/></svg><svg style="left:64px;top:197px" width="24" height="24" viewBox="0 0 24 24"><defs><linearGradient id="bc2" x1="0" x2="1"><stop offset="0" stop-color="#2b4f9a"/><stop offset=".45" stop-color="#7ba3e0"/><stop offset="1" stop-color="#1e3b7a"/></linearGradient></defs><path d="M7 5.5 V18 A5 2.2 0 0 0 17 18 V5.5" fill="url(#bc2)" stroke="#1b2a4a"/><ellipse cx="12" cy="5.5" rx="5" ry="2.2" fill="#7a9ad8" stroke="#1b2a4a"/></svg><svg style="left:64px;top:225px" width="24" height="24" viewBox="0 0 24 24"><path d="M7 5.5 V18 A5 2.2 0 0 0 17 18 V5.5" fill="#dfe6f4" stroke="#333"/><ellipse cx="12" cy="5.5" rx="5" ry="2.2" fill="#eef" stroke="#333"/></svg><svg style="left:64px;top:253px" width="24" height="24" viewBox="0 0 24 24"><path d="M7 5.5 V18 A5 2.2 0 0 0 17 18 V5.5" fill="none" stroke="#333"/><ellipse cx="12" cy="5.5" rx="5" ry="2.2" fill="none" stroke="#333"/><path d="M9 8 L13 19 M15 8 L11 19" stroke="#333" stroke-width=".9"/></svg><div class="dsep" style="left:1336px;top:1003px;height:16px"></div><div class="a" style="left:1341px;top:1003px;width:132px;height:15px;background:#fff"></div><svg style="left:1459px;top:1003px" width="14" height="14"><circle cx="8.5" cy="5.5" r="4" fill="none" stroke="#3a70c0" stroke-width="1.5"/><path d="M5.5 8.5 L1 13" stroke="#3a70c0" stroke-width="2"/></svg><div class="dsep" style="left:1476px;top:1003px;height:16px"></div><div class="st" style="left:1485px;top:1003px">绝对 XY 上视图</div><div class="ss" style="left:1591px;top:1002px"></div><div class="st" style="left:1601px;top:1003px">绝对视图</div><div class="dsep" style="left:1659px;top:1003px;height:16px"></div><div class="st" style="left:1668px;top:1003px;font-weight:bold;font-size:12.5px">LAYER0</div><div class="ss" style="left:1726px;top:1002px"></div><div class="ss" style="left:1757px;top:1002px"></div><div class="a" style="left:1762px;top:1005px;width:32px;height:12px;background:#46618c"></div><div class="a" style="left:1805px;top:1005px;width:32px;height:12px;background:#46618c"></div><div class="a" style="left:1848px;top:1005px;width:32px;height:12px;background:#46618c"></div><div class="ss" style="left:1800px;top:1002px"></div><div class="ss" style="left:1843px;top:1002px"></div><div class="ss" style="left:1886px;top:1002px"></div><svg style="left:1893px;top:1003px" width="14" height="14"><circle cx="7" cy="7" r="6.5" fill="#2a5ad0"/><path d="M3 4 Q6 2 7 5 Q5 8 8 9 Q10 12 6 13 Q2 10 3 4Z M9 2 Q13 4 12 8 Q10 6 9 2Z" fill="#3cb83c"/></svg><div class="ss" style="left:1132px;top:1022px"></div><div class="ss" style="left:1175px;top:1022px"></div><div class="ss" style="left:1206px;top:1022px"></div><div class="ss" style="left:1237px;top:1022px"></div><div class="ss" style="left:1268px;top:1022px"></div><div class="ss" style="left:1299px;top:1022px"></div><div class="ss" style="left:1331px;top:1022px"></div><div class="ss" style="left:1362px;top:1022px"></div><div class="ss" style="left:1423px;top:1022px"></div><div class="ss" style="left:1453px;top:1022px"></div><div class="ss" style="left:1580px;top:1022px"></div><div class="ss" style="left:1655px;top:1022px"></div><div class="st" style="left:1141px;top:1024px">拴牢</div><div class="st" style="left:1462px;top:1024px;font-size:12.5px;letter-spacing:-.3px">LS: 1.00 PS: 1.00</div><div class="st" style="left:1589px;top:1024px;font-size:12.5px;letter-spacing:-.2px">单位: 毫米</div><div class="st" style="left:1662px;top:1024px;font-size:12.5px;word-spacing:1.7px">X = 1111.080 Y = 0514.997 <span style="color:#f41616">Z =-0619.286</span></div><svg style="left:1182px;top:1022px" width="17" height="17" viewBox="0 0 17 17"><rect x=".5" y=".5" width="16" height="16" fill="#e8e0ea" stroke="#555"/><path d="M4 8 Q4 3 9 3 L9 1 L12 4 L9 7 V5 Q6 5 6 8Z M13 9 Q13 14 8 14 L8 16 L5 13 L8 10 V12 Q11 12 11 9Z" fill="#e05050"/></svg><div class="a" style="left:1211px;top:1022px;width:19px;height:17px;background:#fee59a"></div><svg style="left:1212px;top:1022px" width="17" height="17" viewBox="0 0 17 17"><path d="M3 3 L8 12 L6 16 L12 11 L15 17" fill="#c8a0e8"/><path d="M2 2 L4 8 L8 6Z" fill="#e0c020"/><path d="M7 6 L15 14 L11 14 L13 18" stroke="#888" fill="#ddd"/></svg><svg style="left:1245px;top:1022px" width="17" height="17" viewBox="0 0 17 17"><path d="M2 6 L8 2 L15 4 L13 8 L6 9Z" fill="#e8b060" stroke="#8a5a20" stroke-width=".5"/><rect x="3" y="9" width="10" height="7" fill="#fff" stroke="#3a60c0"/><circle cx="6" cy="12.5" r="1.5" fill="#3a60c0"/><circle cx="10" cy="12.5" r="1.5" fill="#3a60c0"/></svg><svg style="left:1277px;top:1022px" width="17" height="17" viewBox="0 0 17 17"><text x="8" y="14" font-size="16" font-weight="bold" text-anchor="middle" font-family="Liberation Sans" fill="#3d6ac0">?</text><ellipse cx="8" cy="16" rx="5" ry="1.2" fill="#888" opacity=".6"/></svg><svg style="left:1305px;top:1022px" width="17" height="17" viewBox="0 0 17 17"><path d="M5 1 L10 3 V8 L5 10 L0 8 V3Z" fill="#4a8ae0" stroke="#224"/><path d="M10 7 L15 9 V14 L10 16 L5 14 V9Z" fill="#6a9aaa" stroke="#224"/><path d="M1 12 H7 M4 10 L7 12 L4 14" stroke="#e02020" stroke-width="1.6" fill="none"/></svg><div class="a" style="left:1336px;top:1022px;width:19px;height:17px;background:#fee59a"></div><svg style="left:1337px;top:1022px" width="17" height="17" viewBox="0 0 17 17"><path d="M2 4 L8 1 L15 4 V13 L8 16 L2 13Z" fill="#8ab0b0" stroke="#3a60c0"/><path d="M2 4 L8 7 L15 4 L8 1Z" fill="#e040e0" stroke="#3a60c0"/><path d="M8 7 V16" stroke="#3a60c0"/></svg><svg style="left:1430px;top:1022px" width="17" height="17" viewBox="0 0 17 17"><rect x="1" y="2" width="14" height="13" fill="none" stroke="#556"/><path d="M8 2 V15 M1 8 H15" stroke="#556"/></svg><svg style="left:0;top:0" width="1920" height="1048" viewBox="0 0 1920 1048">
<circle cx="1367.6" cy="1005.4" r="8.3" fill="#8e5e4c"/><text x="1367.6" y="1010" font-size="12.5" text-anchor="middle" font-family="Liberation Sans" fill="#fff">A</text>
<circle cx="1374.3" cy="1026.5" r="8.3" fill="#8e5e4c"/><path d="M1369 1022 L1372 1020 H1377 L1380 1022 L1378.5 1025 H1377.5 V1031 H1371 V1025 H1370Z" fill="#fff"/>
<ellipse cx="1407" cy="1039" rx="15" ry="2.5" fill="#b0703a" opacity=".8"/>
<path d="M1390 1016 Q1384 1024 1388 1030 Q1392 1040 1402 1039 L1415 1039 Q1426 1036 1425 1026 Q1432 1026 1431 1021 Q1428 1016 1420 1016Z" fill="#fff35a" stroke="#b8783a" stroke-width="1"/>
<path d="M1400 968 Q1396 964 1400 962 Q1404 962 1403 967 L1405 974" stroke="#9a5a28" stroke-width="1.5" fill="#9a5a28"/><path d="M1409 966 Q1412 965 1411 969 L1408 975" stroke="#9a5a28" stroke-width="1.5" fill="none"/>
<circle cx="1391" cy="977.5" r="5.5" fill="#c8874a" stroke="#a0602a" stroke-width=".8"/><circle cx="1423" cy="977.5" r="5.5" fill="#c8874a" stroke="#a0602a" stroke-width=".8"/>
<circle cx="1390" cy="978" r="2.2" fill="#f2c0a8"/><circle cx="1424" cy="978" r="2.2" fill="#f2c0a8"/>
<ellipse cx="1406" cy="997" rx="27" ry="22" fill="#c8874a" stroke="#a0602a" stroke-width="1"/>
<ellipse cx="1406" cy="1000" rx="20.5" ry="16.5" fill="#fff35a" stroke="#a0602a" stroke-width=".7"/>
<circle cx="1395.7" cy="993.7" r="1.5" fill="#5a2a10"/><circle cx="1416.6" cy="993.7" r="1.5" fill="#5a2a10"/><path d="M1405 998 H1408" stroke="#5a2a10" stroke-width="1"/>
<circle cx="1391" cy="1000" r="3" fill="#f8a030" opacity=".75"/><circle cx="1422" cy="1000" r="3" fill="#f8a030" opacity=".75"/>
<path d="M1400 1020 L1416 1012" stroke="#8a5a30" stroke-width="1.2"/>
<circle cx="1394.6" cy="1029" r="7.5" fill="#c8874a" stroke="#a0602a" stroke-width=".7"/><circle cx="1389.5" cy="1022.5" r="2.3" fill="#c8874a" stroke="#a0602a" stroke-width=".5"/><circle cx="1399.5" cy="1022.5" r="2.3" fill="#c8874a" stroke="#a0602a" stroke-width=".5"/>
<circle cx="1391" cy="1030" r="1.3" fill="#f070a0"/><circle cx="1399" cy="1030" r="1.3" fill="#f070a0"/>
<path d="M1437 974 L1441 988 L1446 979 L1451 988 L1455 974" stroke="#b07040" stroke-width="6.5" fill="none" stroke-linejoin="round" stroke-linecap="round"/><path d="M1437 974 L1441 988 L1446 979 L1451 988 L1455 974" stroke="#fff" stroke-width="4.3" fill="none" stroke-linejoin="round" stroke-linecap="round"/>
<circle cx="1442" cy="977" r="1.3" fill="#e0a070"/><circle cx="1450" cy="982" r="1.3" fill="#e0a070"/>
<circle cx="1439" cy="993" r="3.2" fill="#c8874a" stroke="#a0602a" stroke-width=".7"/><circle cx="1453" cy="993" r="3.2" fill="#c8874a" stroke="#a0602a" stroke-width=".7"/>
<ellipse cx="1446" cy="1002.5" rx="9.5" ry="10" fill="#c8874a" stroke="#a0602a" stroke-width=".8"/><ellipse cx="1446" cy="1002.5" rx="3.2" ry="4.5" fill="#fff"/>
<path d="M1437 1015 L1441 1030 L1446 1021 L1451 1030 L1455 1015" stroke="#c8a040" stroke-width="7" fill="none" stroke-linejoin="round" stroke-linecap="round"/><path d="M1437 1015 L1441 1030 L1446 1021 L1451 1030 L1455 1015" stroke="#fff35a" stroke-width="5" fill="none" stroke-linejoin="round" stroke-linecap="round"/>
</svg><svg style="left:0;top:0" width="1920" height="1048">
<path d="M1541 795 L1539 860" stroke="#1fb4c4" stroke-width="2.2"/><path d="M1535 857 L1539 866 L1543 857Z" fill="#1aa0b0"/>
<text x="1533.5" y="879" font-size="11.5" font-family="Liberation Sans" fill="#ff1010">Z</text>
<text x="1499" y="794" font-size="11.5" font-family="Liberation Sans" fill="#ff1010">Y</text>
<path d="M1506 787 L1514 796 M1514 787 L1506 796" stroke="#ddd" stroke-width=".9"/>
<ellipse cx="1521" cy="792" rx="4" ry="2.8" fill="#a02030"/><circle cx="1514" cy="790" r="2.5" fill="#208a20"/>
<path d="M1516 790.5 L1539 791" stroke="#30c030" stroke-width="1.8"/><circle cx="1541" cy="791" r="2.6" fill="#777"/>
<path d="M1544 792 H1566" stroke="#ccc" stroke-dasharray="4 3"/>
<text x="78" y="947" font-size="10" font-family="Liberation Sans" fill="#e02020">Y</text>
<path d="M84 940 L91 947 M91 940 L84 947" stroke="#ddd" stroke-width=".8"/>
<path d="M88 941 L120 941" stroke="#30b030" stroke-width="1.5"/><path d="M93 943 H120" stroke="#e8e030" stroke-width="1"/>
<circle cx="101" cy="941" r="3" fill="#d02020"/><circle cx="120" cy="941" r="3" fill="#777"/>
<rect x="100.5" y="945.5" width="17" height="21" fill="#7d879c" stroke="#c8c8c8"/>
<path d="M120 944 L118 1001" stroke="#20d8e0" stroke-width="2"/>
</svg><svg style="left:0;top:0" width="1920" height="1048" viewBox="0 0 1920 1048"><defs>
<linearGradient id="gcylg" x1="0" x2="1"><stop offset="0" stop-color="#4a4a4a"/><stop offset=".35" stop-color="#8a8a8a"/><stop offset="1" stop-color="#3a3a3a"/></linearGradient>
<linearGradient id="gcylgv" x1="0" x2="0" y1="0" y2="1"><stop offset="0" stop-color="#3a3a3a"/><stop offset=".4" stop-color="#6e6e6e"/><stop offset="1" stop-color="#2e2e2e"/></linearGradient>
<linearGradient id="gcylw" x1="0" x2="1"><stop offset="0" stop-color="#9a9aaa"/><stop offset=".4" stop-color="#ffffff"/><stop offset="1" stop-color="#8a8a96"/></linearGradient>
<linearGradient id="gcyll" x1="0" x2="1"><stop offset="0" stop-color="#8a8a98"/><stop offset=".35" stop-color="#d4d5e8"/><stop offset=".7" stop-color="#c4c5d8"/><stop offset="1" stop-color="#7a7a86"/></linearGradient>
<linearGradient id="gbowl" x1="0" x2="1"><stop offset="0" stop-color="#c2c3d6"/><stop offset=".08" stop-color="#d2d3e6"/><stop offset=".45" stop-color="#d0d1e4"/><stop offset=".7" stop-color="#a9aab8"/><stop offset=".88" stop-color="#74757e"/><stop offset="1" stop-color="#58595f"/></linearGradient>
<linearGradient id="gbowl2" x1="0" x2="1"><stop offset="0" stop-color="#c8c9dc"/><stop offset=".35" stop-color="#d6d7ea"/><stop offset=".7" stop-color="#a8a9b6"/><stop offset="1" stop-color="#62636a"/></linearGradient>
<linearGradient id="gpanel" x1="0" x2="1"><stop offset="0" stop-color="#7c7c7c"/><stop offset="1" stop-color="#6a6a6a"/></linearGradient>
<linearGradient id="gstrip" x1="0" x2="1"><stop offset="0" stop-color="#6a6a6a"/><stop offset=".5" stop-color="#9a9a9a"/><stop offset="1" stop-color="#5a5a5a"/></linearGradient>
<linearGradient id="gfoot" x1="0" x2="1"><stop offset="0" stop-color="#7a0a0a"/><stop offset=".4" stop-color="#8a1414"/><stop offset="1" stop-color="#3a0404"/></linearGradient><linearGradient id="gring" x1="0" x2="1"><stop offset="0" stop-color="#dcdcea"/><stop offset=".6" stop-color="#e8e8f4"/><stop offset="1" stop-color="#707078"/></linearGradient>
<radialGradient id="gred" cx=".6" cy=".45" r=".6"><stop offset="0" stop-color="#b01010"/><stop offset="1" stop-color="#500505"/></radialGradient>
<radialGradient id="ggrn" cx=".6" cy=".45" r=".6"><stop offset="0" stop-color="#18a82a"/><stop offset="1" stop-color="#08540e"/></radialGradient>
</defs><rect x="1422" y="309" width="112" height="75" fill="#464646" stroke="#111" stroke-width="1" /><rect x="1422" y="310" width="13" height="73" fill="#7b7b7b" stroke="none" stroke-width="1" /><ellipse cx="1451" cy="330" rx="1.6" ry="2" fill="none" stroke="#111" stroke-width=".8"/><ellipse cx="1451" cy="365" rx="1.6" ry="2" fill="none" stroke="#111" stroke-width=".8"/><ellipse cx="1470" cy="330" rx="1.6" ry="2" fill="none" stroke="#111" stroke-width=".8"/><ellipse cx="1470" cy="365" rx="1.6" ry="2" fill="none" stroke="#111" stroke-width=".8"/><ellipse cx="1498" cy="330" rx="1.6" ry="2" fill="none" stroke="#111" stroke-width=".8"/><ellipse cx="1498" cy="365" rx="1.6" ry="2" fill="none" stroke="#111" stroke-width=".8"/><ellipse cx="1518" cy="330" rx="1.6" ry="2" fill="none" stroke="#111" stroke-width=".8"/><ellipse cx="1518" cy="365" rx="1.6" ry="2" fill="none" stroke="#111" stroke-width=".8"/><line x1="817" y1="242" x2="843" y2="242" stroke="#111" stroke-width="2" /><line x1="823" y1="242" x2="836" y2="242" stroke="#ddd" stroke-width="1" /><rect x="822" y="257" width="23" height="8" fill="#f0f0f4" stroke="#111" stroke-width="1" /><polygon points="709,274 845,274 845,289 709,289" fill="#cfd0e4" stroke="#111" stroke-width="1" /><rect x="730" y="280" width="38" height="9" fill="#66676e" stroke="#111" stroke-width="0.8" /><rect x="773" y="280" width="70" height="6" fill="#66676e" stroke="#111" stroke-width="0.8" /><polygon points="709,274 719,274 713,502 702,502" fill="#6a6b75" stroke="#111" stroke-width="1" /><polygon points="709,274 713.5,274 706.95,502 702,502" fill="#cfd0e4" stroke="none" stroke-width="0" /><polygon points="714.5,274 718.0,274 711.9,502 708.05,502" fill="#cfd0e4" stroke="none" stroke-width="0" /><polygon points="713.5,274 714.5,274 708.05,502 706.95,502" fill="#111" stroke="none" stroke-width="0" /><polygon points="714,289 729,289 736,297 736,341 729,348 714,348" fill="#cfd0e4" stroke="#111" stroke-width="1" /><rect x="729" y="289" width="114" height="8" fill="#5a5b61" stroke="#111" stroke-width="0.8" /><rect x="736" y="297" width="107" height="44" fill="#66676e" stroke="#111" stroke-width="0.8" /><rect x="729" y="341" width="114" height="7" fill="#5a5b61" stroke="#111" stroke-width="0.8" /><rect x="788" y="297" width="55" height="7" fill="#3e3e3e" stroke="#111" stroke-width="0.6" /><rect x="831" y="295" width="12" height="10" fill="#8a9080" stroke="#222" stroke-width="0.5" /><rect x="831" y="341" width="12" height="6" fill="#8a9080" stroke="#222" stroke-width="0.5" /><polygon points="716,348 729,348 728,502 713,502" fill="#6a6b75" stroke="#111" stroke-width="1" /><polygon points="716,348 718.86,348 716.3,502 713,502" fill="#cfd0e4" stroke="none" stroke-width="0" /><polygon points="718.86,348 719.9,348 717.5,502 716.3,502" fill="#111" stroke="none" stroke-width="0" /><polygon points="719.9,348 722.5,348 720.5,502 717.5,502" fill="#cfd0e4" stroke="none" stroke-width="0" /><polygon points="725.1,348 725.62,348 724.1,502 723.5,502" fill="#c8c9dc" stroke="none" stroke-width="0" /><polygon points="725.88,348 726.4,348 725.0,502 724.4,502" fill="#111" stroke="none" stroke-width="0" /><rect x="728" y="348" width="40" height="154" fill="#66676e" stroke="#111" stroke-width="0.8" /><polygon points="767,348 785,348 785,502 767,502" fill="#6a6b75" stroke="#111" stroke-width="1" /><polygon points="767,348 770.96,348 770.96,502 767,502" fill="#cfd0e4" stroke="none" stroke-width="0" /><polygon points="770.96,348 772.4,348 772.4,502 770.96,502" fill="#111" stroke="none" stroke-width="0" /><polygon points="772.4,348 776.0,348 776.0,502 772.4,502" fill="#cfd0e4" stroke="none" stroke-width="0" /><polygon points="779.6,348 780.32,348 780.32,502 779.6,502" fill="#c8c9dc" stroke="none" stroke-width="0" /><polygon points="780.68,348 781.4,348 781.4,502 780.68,502" fill="#111" stroke="none" stroke-width="0" /><polygon points="744,403 753,403 785,485 785,502 742,502" fill="#cfd0e4" stroke="#111" stroke-width="1" /><polygon points="753,403 757,403 785,475 785,485" fill="#777" stroke="#111" stroke-width="0.6" /><rect x="786" y="348" width="26" height="5" fill="#cfd0e4" stroke="#111" stroke-width="0.6" /><rect x="812" y="348" width="31" height="6" fill="#66676e" stroke="#111" stroke-width="0.6" /><rect x="799" y="353" width="25" height="69" fill="url(#gcylg)" stroke="#111" stroke-width="0.8" /><rect x="802" y="422" width="14" height="77" fill="url(#gcylg)" stroke="#111" stroke-width="0.8" /><rect x="844" y="383" width="12" height="105" fill="url(#gcylw)" stroke="#111" stroke-width="0.6" /><polygon points="834,490 863,490 863,500 834,500" fill="#666" stroke="#222" stroke-width="0.6" /><rect x="840" y="486" width="18" height="5" fill="#777" stroke="#222" stroke-width="0.5" /><rect x="961" y="276" width="38" height="11" fill="#66676e" stroke="#111" stroke-width="0.8" /><rect x="1064" y="279" width="39" height="8" fill="#66676e" stroke="#111" stroke-width="0.8" /><rect x="962" y="285" width="13" height="2" fill="#cfd0e4" stroke="none" stroke-width="1" /><rect x="976" y="285" width="4" height="2" fill="#cfd0e4" stroke="none" stroke-width="1" /><rect x="982" y="285" width="3" height="2" fill="#cfd0e4" stroke="none" stroke-width="1" /><rect x="958" y="287" width="152" height="61" fill="#66676e" stroke="#111" stroke-width="0.8" /><line x1="958" y1="289.5" x2="1110" y2="289.5" stroke="#111" stroke-width="0.9" /><line x1="958" y1="316" x2="1110" y2="316" stroke="#111" stroke-width="0.9" /><line x1="958" y1="323" x2="1110" y2="323" stroke="#111" stroke-width="0.9" /><line x1="958" y1="340" x2="1110" y2="340" stroke="#111" stroke-width="0.9" /><line x1="958" y1="343.5" x2="1110" y2="343.5" stroke="#111" stroke-width="0.9" /><rect x="958" y="296" width="68" height="7.5" rx="2" fill="url(#gcylgv)" stroke="#111" stroke-width=".6"/><rect x="1056" y="296" width="54" height="7.5" fill="#3a3a3a" stroke="#111" stroke-width="0.6" /><rect x="1017" y="290" width="2" height="4" fill="#ddd" stroke="none" stroke-width="1" /><rect x="968" y="304" width="4" height="8" fill="#d8d8ea" stroke="#111" stroke-width="0.6" /><rect x="968" y="327" width="4" height="10" fill="#d8d8ea" stroke="#111" stroke-width="0.6" /><rect x="1014" y="304" width="4" height="8" fill="#d8d8ea" stroke="#111" stroke-width="0.6" /><rect x="1014" y="327" width="4" height="10" fill="#d8d8ea" stroke="#111" stroke-width="0.6" /><rect x="986" y="304" width="32" height="8" fill="none" stroke="#111" stroke-width="0.9" /><rect x="986" y="327" width="32" height="10" fill="none" stroke="#111" stroke-width="0.9" /><rect x="1030" y="304" width="4" height="8" fill="none" stroke="#111" stroke-width="0.9" /><rect x="1030" y="327" width="4" height="10" fill="none" stroke="#111" stroke-width="0.9" /><rect x="958" y="348" width="50" height="5" fill="#66676e" stroke="#111" stroke-width="0.6" /><polygon points="1053,286 1060,286 1060,360 1053,360" fill="#858585" stroke="#111" stroke-width="0.8" /><polygon points="1031,313 1053,313 1053,360 1031,360" fill="#808080" stroke="#111" stroke-width="0.8" /><polygon points="1036,285 1053,285 1053,312 1036,312" fill="#f0f0f0" stroke="#111" stroke-width="0.8" /><line x1="1029" y1="352" x2="1045" y2="314" stroke="#f0f0f0" stroke-width="1.6" /><line x1="1029.5" y1="350" x2="1029.5" y2="361" stroke="#f0f0f0" stroke-width="1.6" /><ellipse cx="1025" cy="299.7" rx="3" ry="5" fill="#4a4a4a" stroke="#222" stroke-width=".8"/><rect x="1026" y="293.5" width="13" height="12.5" rx="3" fill="#3e3e3e" stroke="#222" stroke-width=".6"/><path d="M1036 290 L1043 291 Q1047 300 1043 310 L1036 311Z" fill="#5a5a5a" stroke="#111" stroke-width="1"/><ellipse cx="1043" cy="300" rx="2.5" ry="8" fill="#6a6a6a" stroke="#222" stroke-width=".8"/><polygon points="963,353 1030,356 1030,361 963,358" fill="#f4f4f8" stroke="#111" stroke-width="0.6" /><polygon points="969,358 995,358 995,500 969,500" fill="#6a6b75" stroke="#111" stroke-width="1" /><polygon points="969,358 974.72,358 974.72,500 969,500" fill="#cfd0e4" stroke="none" stroke-width="0" /><polygon points="974.72,358 976.8,358 976.8,500 974.72,500" fill="#111" stroke="none" stroke-width="0" /><polygon points="976.8,358 982.0,358 982.0,500 976.8,500" fill="#cfd0e4" stroke="none" stroke-width="0" /><polygon points="987.2,358 988.24,358 988.24,500 987.2,500" fill="#c8c9dc" stroke="none" stroke-width="0" /><polygon points="988.76,358 989.8,358 989.8,500 988.76,500" fill="#111" stroke="none" stroke-width="0" /><polygon points="915,382 930,382 930,500 915,500" fill="#6a6b75" stroke="#111" stroke-width="1" /><polygon points="915,382 918.3,382 918.3,500 915,500" fill="#cfd0e4" stroke="none" stroke-width="0" /><polygon points="918.3,382 919.5,382 919.5,500 918.3,500" fill="#111" stroke="none" stroke-width="0" /><polygon points="919.5,382 922.5,382 922.5,500 919.5,500" fill="#cfd0e4" stroke="none" stroke-width="0" /><polygon points="925.5,382 926.1,382 926.1,500 925.5,500" fill="#c8c9dc" stroke="none" stroke-width="0" /><polygon points="926.4,382 927.0,382 927.0,500 926.4,500" fill="#111" stroke="none" stroke-width="0" /><rect x="945" y="487" width="24" height="13" fill="#cfd0e4" stroke="#111" stroke-width="0.6" /><rect x="945" y="480" width="24" height="7" fill="#cfd0e4" stroke="#111" stroke-width="0.6" /><polygon points="1055,346 1062,346 1061,500 1054,500" fill="#cfd0e4" stroke="#111" stroke-width="1" /><rect x="1061" y="346" width="38" height="154" fill="#66676e" stroke="#111" stroke-width="0.8" /><rect x="1064" y="381" width="68" height="51" fill="#66676e" stroke="#111" stroke-width="0.8" /><circle cx="1073" cy="388" r="1.8" fill="none" stroke="#111" stroke-width=".8"/><circle cx="1096" cy="388" r="1.8" fill="none" stroke="#111" stroke-width=".8"/><circle cx="1073" cy="425" r="1.8" fill="none" stroke="#111" stroke-width=".8"/><circle cx="1096" cy="425" r="1.8" fill="none" stroke="#111" stroke-width=".8"/><circle cx="1078" cy="440" r="1.8" fill="none" stroke="#111" stroke-width=".8"/><circle cx="1077" cy="484" r="1.8" fill="none" stroke="#111" stroke-width=".8"/><line x1="1146" y1="268" x2="1250" y2="268" stroke="#111" stroke-width="2" /><rect x="1123" y="268" width="29" height="29" fill="#cfd0e4" stroke="#111" stroke-width="0.8" /><polygon points="1211,271 1240,271 1240,348 1209,348" fill="#cfd0e4" stroke="#111" stroke-width="0.8" /><rect x="1056" y="287" width="54" height="60" fill="#5c5d64" stroke="#111" stroke-width="0.8" /><line x1="1056" y1="313" x2="1110" y2="313" stroke="#333" stroke-width="0.8" /><line x1="1056" y1="320" x2="1110" y2="320" stroke="#333" stroke-width="0.8" /><line x1="1056" y1="336" x2="1110" y2="336" stroke="#333" stroke-width="0.8" /><line x1="1056" y1="342" x2="1110" y2="342" stroke="#333" stroke-width="0.8" /><rect x="1057" y="297" width="60" height="6" fill="#3a3a3a" stroke="#111" stroke-width="0.6" /><rect x="1061" y="347" width="40" height="35" fill="#66676e" stroke="#111" stroke-width="0.8" /><polygon points="1110,291 1150,295 1152,305 1110,305" fill="#cfd0e4" stroke="#111" stroke-width="0.6" /><rect x="1099" y="305" width="38" height="30" fill="#cfd0e4" stroke="#111" stroke-width="0.8" /><polygon points="1110,335 1150,335 1152,342 1110,345" fill="#cfd0e4" stroke="#111" stroke-width="0.6" /><rect x="1137" y="306" width="16" height="29" fill="#3a3a3a" stroke="#111" stroke-width="0.6" /><circle cx="1146" cy="313" r="4" fill="#ddd" stroke="#111"/><circle cx="1146" cy="330" r="4" fill="#ddd" stroke="#111"/><rect x="1155" y="288" width="36" height="32" fill="#66676e" stroke="#111" stroke-width="0.8" /><rect x="1150" y="289" width="10" height="31" fill="#cfd0e4" stroke="#111" stroke-width="0.6" /><rect x="1169" y="313" width="32" height="24" fill="#66676e" stroke="#111" stroke-width="0.8" /><rect x="1163" y="314" width="9" height="31" fill="#cfd0e4" stroke="#111" stroke-width="0.6" /><ellipse cx="1170" cy="297" rx="1.4" ry="2" fill="#111"/><ellipse cx="1182" cy="297" rx="1.4" ry="2" fill="#111"/><ellipse cx="1185" cy="325" rx="1.4" ry="2" fill="#111"/><ellipse cx="1194" cy="325" rx="1.4" ry="2" fill="#111"/><ellipse cx="1185" cy="335" rx="1.4" ry="2" fill="#111"/><ellipse cx="1194" cy="335" rx="1.4" ry="2" fill="#111"/><rect x="1154" y="326" width="5" height="19" fill="#7d8278" stroke="#222" stroke-width="0.5" /><rect x="1160" y="326" width="5" height="19" fill="#7d8278" stroke="#222" stroke-width="0.5" /><rect x="1175" y="326" width="5" height="19" fill="#7d8278" stroke="#222" stroke-width="0.5" /><rect x="1182" y="326" width="5" height="19" fill="#7d8278" stroke="#222" stroke-width="0.5" /><rect x="1190" y="326" width="5" height="19" fill="#7d8278" stroke="#222" stroke-width="0.5" /><rect x="1145" y="345" width="55" height="7" fill="#7d8278" stroke="#222" stroke-width="0.6" /><rect x="1143" y="350" width="27" height="25" fill="#cfd0e4" stroke="#111" stroke-width="0.6" /><rect x="1170" y="355" width="22" height="27" fill="#555" stroke="#111" stroke-width="0.6" /><rect x="1192" y="352" width="8" height="33" fill="#66676e" stroke="#111" stroke-width="0.6" /><polygon points="1128,370 1195,380 1195,385 1128,375" fill="#cfd0e4" stroke="#111" stroke-width="0.6" /><polygon points="1120,378 1190,392 1190,398 1120,384" fill="#cfd0e4" stroke="#111" stroke-width="0.6" /><polygon points="1125,386 1165,396 1165,405 1125,395" fill="#7a7a80" stroke="#111" stroke-width="0.6" /><rect x="1115" y="402" width="45" height="6" fill="#555" stroke="#111" stroke-width="0.6" /><rect x="1125" y="408" width="28" height="12" fill="#66676e" stroke="#111" stroke-width="0.8" /><rect x="1124" y="420" width="38" height="4" fill="#555" stroke="#111" stroke-width="0.6" /><rect x="1150" y="386" width="16" height="114" fill="#6a6a70" stroke="#111" stroke-width="0.6" /><rect x="1127" y="424" width="35" height="76" fill="#5a5b62" stroke="#111" stroke-width="0.6" /><rect x="1133" y="424" width="22" height="16" fill="#cfd0e4" stroke="#111" stroke-width="0.6" /><rect x="1128" y="439" width="24" height="5" fill="#666" stroke="#111" stroke-width="0.6" /><rect x="1130" y="444" width="3" height="54" fill="#cfd0e4" stroke="#111" stroke-width="0.5" /><rect x="1136" y="444" width="3" height="54" fill="#555" stroke="#111" stroke-width="0.5" /><rect x="1140" y="444" width="3" height="54" fill="#cfd0e4" stroke="#111" stroke-width="0.5" /><rect x="1146" y="444" width="3" height="54" fill="#555" stroke="#111" stroke-width="0.5" /><rect x="1150" y="444" width="3" height="54" fill="#cfd0e4" stroke="#111" stroke-width="0.5" /><polygon points="1105,407 1124,407 1124,466 1105,466" fill="#cfd0e4" stroke="#111" stroke-width="0.8" /><circle cx="1111" cy="413" r="1.8" fill="none" stroke="#111"/><circle cx="1119" cy="413.5" r="1.8" fill="none" stroke="#111"/><circle cx="1114" cy="449" r="2.5" fill="#111"/><circle cx="1113" cy="462" r="2.5" fill="#111"/><line x1="1105" y1="420" x2="1124" y2="420" stroke="#111" stroke-width="0.8" /><rect x="1113" y="466" width="7" height="32" fill="#cfd0e4" stroke="#111" stroke-width="0.5" /><rect x="1177" y="478" width="30" height="21" fill="#cfd0e4" stroke="#111" stroke-width="0.6" /><line x1="1182" y1="480" x2="1181" y2="499" stroke="#111" stroke-width="1.2" /><line x1="1187.5" y1="480" x2="1186.5" y2="499" stroke="#111" stroke-width="1.2" /><line x1="1193" y1="480" x2="1192" y2="499" stroke="#111" stroke-width="1.2" /><line x1="1199" y1="480" x2="1198" y2="499" stroke="#111" stroke-width="1.2" /><line x1="1204" y1="480" x2="1203" y2="499" stroke="#111" stroke-width="1.2" /><rect x="1177" y="478" width="30" height="4" fill="#cfd0e4" stroke="#111" stroke-width="0.6" /><rect x="1233" y="291" width="81" height="49" fill="#474747" stroke="#111" stroke-width="0.8" /><rect x="1266" y="288" width="21" height="65" fill="#6a6b72" stroke="#111" stroke-width="0.8" /><rect x="1267" y="289" width="3" height="61" fill="#cfd0e4" stroke="none" stroke-width="1" /><rect x="1239" y="296.5" width="14" height="5" rx="2.5" fill="url(#gcylg)" stroke="#222" stroke-width=".4"/><circle cx="1252" cy="299" r="2" fill="#222"/><rect x="1258" y="296.5" width="14" height="5" rx="2.5" fill="url(#gcylg)" stroke="#222" stroke-width=".4"/><circle cx="1271" cy="299" r="2" fill="#222"/><rect x="1289" y="296.5" width="14" height="5" rx="2.5" fill="url(#gcylg)" stroke="#222" stroke-width=".4"/><circle cx="1302" cy="299" r="2" fill="#222"/><rect x="1306" y="296.5" width="14" height="5" rx="2.5" fill="url(#gcylg)" stroke="#222" stroke-width=".4"/><circle cx="1319" cy="299" r="2" fill="#222"/><rect x="1267" y="292" width="4" height="11" rx="2" fill="none" stroke="#e8e8f0" stroke-width="1.2"/><rect x="1274" y="292" width="4" height="11" rx="2" fill="none" stroke="#e8e8f0" stroke-width="1.2"/><rect x="1239" y="331.5" width="14" height="5" rx="2.5" fill="url(#gcylg)" stroke="#222" stroke-width=".4"/><circle cx="1252" cy="334" r="2" fill="#222"/><rect x="1258" y="331.5" width="14" height="5" rx="2.5" fill="url(#gcylg)" stroke="#222" stroke-width=".4"/><circle cx="1271" cy="334" r="2" fill="#222"/><rect x="1289" y="331.5" width="14" height="5" rx="2.5" fill="url(#gcylg)" stroke="#222" stroke-width=".4"/><circle cx="1302" cy="334" r="2" fill="#222"/><rect x="1306" y="331.5" width="14" height="5" rx="2.5" fill="url(#gcylg)" stroke="#222" stroke-width=".4"/><circle cx="1319" cy="334" r="2" fill="#222"/><rect x="1267" y="327" width="4" height="11" rx="2" fill="none" stroke="#e8e8f0" stroke-width="1.2"/><rect x="1274" y="327" width="4" height="11" rx="2" fill="none" stroke="#e8e8f0" stroke-width="1.2"/><rect x="1257" y="353" width="39" height="33" fill="#66676e" stroke="#111" stroke-width="0.8" /><polygon points="1218,373 1253,350 1253,386 1218,386" fill="#cfd0e4" stroke="#111" stroke-width="0.8" /><path d="M1164 388 L1386 395 V479 Q1384 484 1340 483 L1207 481 Q1166 478 1164 472Z" fill="url(#gbowl)" stroke="#111" stroke-width="1"/><defs><linearGradient id="grim" x1="0" x2="1"><stop offset="0" stop-color="#4a4b50"/><stop offset="1" stop-color="#c8c9dc"/></linearGradient></defs><path d="M1164 378 L1386 392.5 L1386 395 L1283 391 L1164 388Z" fill="#8a8b8a" stroke="#111" stroke-width="1"/><path d="M1164 383 L1283 388 L1283 394 L1164 389Z" fill="url(#grim)" stroke="#111" stroke-width=".8"/><path d="M1283 388 L1386 392.5 L1386 395 L1283 394Z" fill="#d4d5e8" stroke="#111" stroke-width=".8"/><line x1="1333" y1="389.5" x2="1333" y2="394.5" stroke="#111" stroke-width="0.8" /><line x1="1356" y1="390.5" x2="1356" y2="395" stroke="#111" stroke-width="0.8" /><rect x="1168" y="377" width="2" height="3" fill="#e8d820" stroke="none" stroke-width="1" /><rect x="1188" y="376" width="2" height="3" fill="#e8d820" stroke="none" stroke-width="1" /><rect x="1191" y="377" width="2" height="3" fill="#e8d820" stroke="none" stroke-width="1" /><rect x="1195" y="378" width="2" height="3" fill="#e8d820" stroke="none" stroke-width="1" /><rect x="1168" y="385" width="2" height="3" fill="#e8d820" stroke="none" stroke-width="1" /><path d="M1164 467 Q1200 475 1386 474" stroke="#111" stroke-width="1" fill="none"/><path d="M1207 481 L1340 483 V513 Q1338 518 1300 518 L1220 516 Q1208 515 1207 512Z" fill="url(#gbowl2)" stroke="#111" stroke-width="1"/><path d="M1207 508 Q1240 514 1340 512" stroke="#111" stroke-width=".8" fill="none"/><rect x="1216" y="516" width="13" height="7" fill="#d8d8e8" stroke="#222" stroke-width="0.6" /><rect x="1277" y="516" width="13" height="7" fill="#d8d8e8" stroke="#222" stroke-width="0.6" /><rect x="1305" y="516" width="13" height="7" fill="#d8d8e8" stroke="#222" stroke-width="0.6" /><polygon points="1130,383 1164,383 1164,392 1130,392" fill="#8a8a90" stroke="#111" stroke-width="0.5" /><rect x="844" y="206" width="116" height="176" fill="#5b5b5b" stroke="#111" stroke-width="1.5" /><rect x="845" y="207.5" width="20" height="173.5" fill="#808080" stroke="none" stroke-width="1" /><rect x="865" y="207.5" width="13" height="173.5" fill="url(#gstrip)" stroke="none" stroke-width="1" /><line x1="847.5" y1="208" x2="847.5" y2="381" stroke="#111" stroke-width="1" /><line x1="865" y1="208" x2="865" y2="381" stroke="#111" stroke-width="1" /><line x1="878" y1="208" x2="878" y2="381" stroke="#111" stroke-width="0.8" /><rect x="848" y="259.0" width="15" height="7.0" fill="#6c6c6c" stroke="#111" stroke-width="0.8" /><rect x="848" y="267.7" width="15" height="7.0" fill="#6c6c6c" stroke="#111" stroke-width="0.8" /><rect x="848" y="276.4" width="15" height="7.0" fill="#6c6c6c" stroke="#111" stroke-width="0.8" /><rect x="848" y="285.1" width="15" height="7.0" fill="#6c6c6c" stroke="#111" stroke-width="0.8" /><rect x="848" y="293.8" width="15" height="7.0" fill="#6c6c6c" stroke="#111" stroke-width="0.8" /><rect x="848" y="302.5" width="15" height="7.0" fill="#6c6c6c" stroke="#111" stroke-width="0.8" /><rect x="848" y="311.2" width="15" height="7.0" fill="#6c6c6c" stroke="#111" stroke-width="0.8" /><rect x="848" y="319.9" width="15" height="7.0" fill="#6c6c6c" stroke="#111" stroke-width="0.8" /><rect x="848" y="328.6" width="15" height="7.0" fill="#6c6c6c" stroke="#111" stroke-width="0.8" /><rect x="880" y="221" width="77" height="77" fill="#2a0a4a" stroke="#111" stroke-width="0.8" /><rect x="886" y="233" width="66" height="54" fill="#034a48" stroke="#111" stroke-width="0.8" /><rect x="877" y="316" width="80" height="64" fill="#65666d" stroke="#111" stroke-width="1" /><circle cx="892" cy="329" r="7" fill="#d8d8e8" stroke="#222" stroke-width=".6"/><circle cx="895" cy="329" r="6" fill="url(#ggrn)"/><circle cx="917" cy="329" r="7" fill="#d8d8e8" stroke="#222" stroke-width=".6"/><circle cx="920" cy="329" r="6" fill="url(#ggrn)"/><circle cx="942" cy="328" r="7" fill="#d8d8e8" stroke="#222" stroke-width=".6"/><circle cx="945" cy="328" r="6" fill="url(#gred)"/><circle cx="891" cy="355" r="7" fill="#d8d8e8" stroke="#222" stroke-width=".6"/><circle cx="894" cy="355" r="6" fill="url(#gred)"/><circle cx="917" cy="355" r="7" fill="#d8d8e8" stroke="#222" stroke-width=".6"/><circle cx="920" cy="355" r="6" fill="url(#gred)"/><circle cx="942" cy="354" r="8" fill="#d8d8e8" stroke="#222" stroke-width=".6"/><circle cx="945" cy="354" r="7" fill="url(#gred)"/><rect x="866" y="382" width="74" height="5" fill="#5a5a5a" stroke="#111" stroke-width="0.8" /><rect x="880" y="387" width="33" height="18" fill="#5a5a5a" stroke="#111" stroke-width="0.8" /><circle cx="888" cy="393" r="1.2" fill="#111"/><circle cx="906" cy="393" r="1.2" fill="#111"/><rect x="880" y="405" width="6" height="13" fill="#6a6a6a" stroke="#111" stroke-width="0.6" /><rect x="884" y="405" width="25" height="100" fill="url(#gcyll)" stroke="#111" stroke-width="0.8" /><rect x="929" y="385" width="23" height="37" fill="url(#gcylg)" stroke="#111" stroke-width="0.8" /><rect x="930" y="422" width="17" height="76" fill="url(#gcylg)" stroke="#111" stroke-width="0.8" /><polygon points="700,500 1080,500 1110,501 1110,508 700,508" fill="#6d6e72" stroke="#111" stroke-width="0.8" /><polygon points="718,500 850,500 850,508 718,508" fill="#818289" stroke="none" stroke-width="1" /><polygon points="880,503 935,503 935,510 880,510" fill="#c0c1d4" stroke="#111" stroke-width="0.5" /><rect x="1050" y="505" width="108" height="7" fill="#5e5f64" stroke="#111" stroke-width="0.8" /><polygon points="1098,498 1117,498 1117,505 1098,505" fill="#cfd0e4" stroke="#111" stroke-width="0.6" /><rect x="1117" y="498" width="43" height="7" fill="#66676e" stroke="#111" stroke-width="0.6" /><rect x="1140" y="498" width="20" height="14" fill="#66676e" stroke="#111" stroke-width="0.6" /><polygon points="1172,498 1207,499 1207,507 1172,506" fill="#cfd0e4" stroke="#111" stroke-width="0.6" /><polygon points="1160,504 1194,506 1194,513 1160,512" fill="#cfd0e4" stroke="#111" stroke-width="0.6" /><polygon points="1194,506 1212,507 1212,512 1194,512" fill="#66676e" stroke="#111" stroke-width="0.6" /><polygon points="1064,517 1100,512 1230,518 1453,528 1453,536 1257,536 1064,526" fill="#5e5f5c" stroke="#111" stroke-width="0.8" /><polygon points="1064,519 1257,528.5 1257,536 1064,526.5" fill="#858683" stroke="#111" stroke-width="0.6" /><rect x="1257" y="529" width="196" height="8" fill="#505050" stroke="#111" stroke-width="0.8" /><polygon points="1268,537 1443,537 1443,551 1268,551" fill="#606168" stroke="#111" stroke-width="0.8" /><polygon points="1073,525 1248,537 1248,549 1073,538" fill="#cfd0e4" stroke="#111" stroke-width="0.8" /><polygon points="1073,538 1248,549 1248,551 1073,541" fill="#66676e" stroke="none" stroke-width="1" /><polygon points="1259,817 1426,828 1426,830 1259,830" fill="#cfd0e4" stroke="#111" stroke-width="0.6" /><polygon points="1085,817 1240,828 1240,830 1085,824" fill="#66676e" stroke="#111" stroke-width="0.6" /><polygon points="1259,830 1435,830 1435,843 1259,843" fill="#67686f" stroke="#111" stroke-width="0.8" /><polygon points="1064,818 1240,829 1240,843 1064,832" fill="#cfd0e4" stroke="#111" stroke-width="0.8" /><polygon points="1077,536 1091,536 1086,830 1072,830" fill="#66676e" stroke="#111" stroke-width="1" /><polygon points="1064,518 1074,518 1066,832 1056,832" fill="#cfd0e4" stroke="#111" stroke-width="1" /><polygon points="1074,520 1086,520 1080,832 1066,832" fill="#66676e" stroke="#111" stroke-width="1" /><polygon points="1248,536 1257,536 1249,843 1240,843" fill="#cfd0e4" stroke="#111" stroke-width="1" /><polygon points="1257,536 1268,536 1259,843 1249,843" fill="#66676e" stroke="#111" stroke-width="1" /><polygon points="1433,537 1443,537 1435,843 1426,843" fill="#cfd0e4" stroke="#111" stroke-width="1" /><polygon points="1443,536 1453,536 1444,843 1435,843" fill="#66676e" stroke="#111" stroke-width="1" /><rect x="1245" y="832" width="10" height="5" fill="#c8c8d4" stroke="#111" stroke-width="1" /><rect x="1246.5" y="833" width="2.0" height="3" fill="#f0f0f8" stroke="none" stroke-width="1" /><rect x="1247.5" y="837" width="5.0" height="3" fill="#e0d818" stroke="none" stroke-width="1" /><rect x="1245" y="840" width="10" height="6" fill="#dcdce6" stroke="#111" stroke-width="1" /><rect x="1248.5" y="841" width="4.0" height="4" fill="#f4f4f8" stroke="none" stroke-width="1" /><path d="M1236.5 848 Q1236.5 846 1240.5 846 H1259.5 Q1263.5 846 1263.5 848 V853.5 H1236.5Z" fill="url(#gfoot)" stroke="#111" stroke-width="1"/><line x1="1236.5" y1="849.5" x2="1263.5" y2="849.5" stroke="#111" stroke-width="1" /><line x1="1236.5" y1="852.5" x2="1263.5" y2="852.5" stroke="#111" stroke-width="1" /><rect x="1237.5" y="853.5" width="25.0" height="3.5" fill="url(#gring)" stroke="#111" stroke-width="1" /><rect x="1244" y="845" width="10" height="5" fill="#c8c8d4" stroke="#111" stroke-width="1" /><rect x="1245.5" y="846" width="2.0" height="3" fill="#f0f0f8" stroke="none" stroke-width="1" /><rect x="1246.5" y="850" width="5.0" height="3" fill="#e0d818" stroke="none" stroke-width="1" /><rect x="1244" y="853" width="10" height="6" fill="#dcdce6" stroke="#111" stroke-width="1" /><rect x="1247.5" y="854" width="4.0" height="4" fill="#f4f4f8" stroke="none" stroke-width="1" /><path d="M1235.5 861 Q1235.5 859 1239.5 859 H1258.5 Q1262.5 859 1262.5 861 V866.5 H1235.5Z" fill="url(#gfoot)" stroke="#111" stroke-width="1"/><line x1="1235.5" y1="862.5" x2="1262.5" y2="862.5" stroke="#111" stroke-width="1" /><line x1="1235.5" y1="865.5" x2="1262.5" y2="865.5" stroke="#111" stroke-width="1" /><rect x="1236.5" y="866.5" width="25.0" height="3.5" fill="url(#gring)" stroke="#111" stroke-width="1" /><rect x="1429" y="845" width="10" height="5" fill="#c8c8d4" stroke="#111" stroke-width="1" /><rect x="1430.5" y="846" width="2.0" height="3" fill="#f0f0f8" stroke="none" stroke-width="1" /><rect x="1431.5" y="850" width="5.0" height="3" fill="#e0d818" stroke="none" stroke-width="1" /><rect x="1429" y="853" width="10" height="6" fill="#dcdce6" stroke="#111" stroke-width="1" /><rect x="1432.5" y="854" width="4.0" height="4" fill="#f4f4f8" stroke="none" stroke-width="1" /><path d="M1420.5 861 Q1420.5 859 1424.5 859 H1443.5 Q1447.5 859 1447.5 861 V866.5 H1420.5Z" fill="url(#gfoot)" stroke="#111" stroke-width="1"/><line x1="1420.5" y1="862.5" x2="1447.5" y2="862.5" stroke="#111" stroke-width="1" /><line x1="1420.5" y1="865.5" x2="1447.5" y2="865.5" stroke="#111" stroke-width="1" /><rect x="1421.5" y="866.5" width="25.0" height="3.5" fill="url(#gring)" stroke="#111" stroke-width="1" /><rect x="720" y="522" width="187" height="269" fill="#454545" stroke="#111" stroke-width="0.8" /><polygon points="927,534 935,534 935,798 927,798" fill="#4a4f4a" stroke="#111" stroke-width="0.6" /><polygon points="934,535 1064,535 1062,807 934,798" fill="#8e978c" stroke="#111" stroke-width="0.8" /><polygon points="866,790 935,797 1057,807 1057,810 866,808" fill="#6f766e" stroke="#111" stroke-width="0.6" /><rect x="868" y="808" width="189" height="19" fill="#5d5e65" stroke="#111" stroke-width="0.8" /><line x1="868" y1="816" x2="1057" y2="816" stroke="#333" stroke-width="0.8" /><rect x="862" y="508" width="196" height="29" fill="#66676e" stroke="#111" stroke-width="0.8" /><line x1="862" y1="511" x2="1058" y2="511" stroke="#222" stroke-width="1" /><line x1="862" y1="518" x2="1058" y2="518" stroke="#222" stroke-width="1" /><line x1="862" y1="524.5" x2="1058" y2="524.5" stroke="#222" stroke-width="1" /><line x1="862" y1="531" x2="1058" y2="531" stroke="#222" stroke-width="1" /><rect x="731" y="561" width="34" height="16" fill="#5e5f66" stroke="#111" stroke-width="0.8" /><rect x="729" y="563" width="4" height="12" fill="#e8e8f0" stroke="none" stroke-width="1" /><rect x="876" y="561" width="22" height="16" fill="#5e5f66" stroke="#111" stroke-width="0.8" /><polygon points="909,534 927,534 927,798 909,798" fill="#6a6b75" stroke="#111" stroke-width="1" /><polygon points="909,534 914.4,534 914.4,798 909,798" fill="#111" stroke="none" stroke-width="0" /><polygon points="914.4,534 916.2,534 916.2,798 914.4,798" fill="#cfd0e4" stroke="none" stroke-width="0" /><polygon points="916.2,534 918.0,534 918.0,798 916.2,798" fill="#111" stroke="none" stroke-width="0" /><polygon points="918.0,534 923.4,534 923.4,798 918.0,798" fill="#cfd0e4" stroke="none" stroke-width="0" /><polygon points="712,507 880,507 880,521 712,510" fill="#7d7e80" stroke="#111" stroke-width="0.6" /><polygon points="718,509 851,520 851,535 718,526" fill="#cfd0e4" stroke="#111" stroke-width="0.8" /><line x1="718" y1="514" x2="851" y2="524.5" stroke="#111" stroke-width="1" /><line x1="718" y1="519.5" x2="851" y2="529" stroke="#111" stroke-width="1" /><polygon points="720,790 850,790 850,812 720,800" fill="#6b7068" stroke="#111" stroke-width="0.6" /><polygon points="704,798 843,812 843,826 704,816" fill="#cfd0e4" stroke="#111" stroke-width="0.8" /><line x1="704" y1="806" x2="843" y2="819" stroke="#111" stroke-width="0.9" /><line x1="704" y1="809" x2="843" y2="822" stroke="#111" stroke-width="0.6" /><polygon points="698,507 720,507 721,817 692,817" fill="#6a6b75" stroke="#111" stroke-width="1" /><polygon points="698,507 702.84,507 698.38,817 692,817" fill="#cfd0e4" stroke="none" stroke-width="0" /><polygon points="702.84,507 704.6,507 700.7,817 698.38,817" fill="#111" stroke="none" stroke-width="0" /><polygon points="704.6,507 709.0,507 706.5,817 700.7,817" fill="#cfd0e4" stroke="none" stroke-width="0" /><polygon points="713.4,507 714.28,507 713.46,817 712.3,817" fill="#c8c9dc" stroke="none" stroke-width="0" /><polygon points="714.72,507 715.6,507 715.2,817 714.04,817" fill="#111" stroke="none" stroke-width="0" /><polygon points="849,518 872,518 869,826 843,826" fill="#6a6b75" stroke="#111" stroke-width="1" /><polygon points="849,518 854.06,518 848.72,826 843,826" fill="#cfd0e4" stroke="none" stroke-width="0" /><polygon points="854.06,518 855.9,518 850.8,826 848.72,826" fill="#111" stroke="none" stroke-width="0" /><polygon points="855.9,518 860.5,518 856.0,826 850.8,826" fill="#cfd0e4" stroke="none" stroke-width="0" /><polygon points="865.1,518 866.02,518 862.24,826 861.2,826" fill="#c8c9dc" stroke="none" stroke-width="0" /><polygon points="866.48,518 867.4,518 863.8,826 862.76,826" fill="#111" stroke="none" stroke-width="0" /><rect x="699" y="817" width="10" height="5" fill="#c8c8d4" stroke="#111" stroke-width="1" /><rect x="700.5" y="818" width="2.0" height="3" fill="#f0f0f8" stroke="none" stroke-width="1" /><rect x="701.5" y="822" width="5.0" height="3" fill="#e0d818" stroke="none" stroke-width="1" /><rect x="699" y="825" width="10" height="6" fill="#dcdce6" stroke="#111" stroke-width="1" /><rect x="702.5" y="826" width="4.0" height="4" fill="#f4f4f8" stroke="none" stroke-width="1" /><path d="M690.5 833 Q690.5 831 694.5 831 H713.5 Q717.5 831 717.5 833 V838.5 H690.5Z" fill="url(#gfoot)" stroke="#111" stroke-width="1"/><line x1="690.5" y1="834.5" x2="717.5" y2="834.5" stroke="#111" stroke-width="1" /><line x1="690.5" y1="837.5" x2="717.5" y2="837.5" stroke="#111" stroke-width="1" /><rect x="691.5" y="838.5" width="25.0" height="3.5" fill="url(#gring)" stroke="#111" stroke-width="1" /><rect x="850" y="828" width="10" height="5" fill="#c8c8d4" stroke="#111" stroke-width="1" /><rect x="851.5" y="829" width="2.0" height="3" fill="#f0f0f8" stroke="none" stroke-width="1" /><rect x="852.5" y="833" width="5.0" height="3" fill="#e0d818" stroke="none" stroke-width="1" /><rect x="850" y="836" width="10" height="6" fill="#dcdce6" stroke="#111" stroke-width="1" /><rect x="853.5" y="837" width="4.0" height="4" fill="#f4f4f8" stroke="none" stroke-width="1" /><path d="M841.5 844 Q841.5 842 845.5 842 H864.5 Q868.5 842 868.5 844 V849.5 H841.5Z" fill="url(#gfoot)" stroke="#111" stroke-width="1"/><line x1="841.5" y1="845.5" x2="868.5" y2="845.5" stroke="#111" stroke-width="1" /><line x1="841.5" y1="848.5" x2="868.5" y2="848.5" stroke="#111" stroke-width="1" /><rect x="842.5" y="849.5" width="25.0" height="3.5" fill="url(#gring)" stroke="#111" stroke-width="1" /><rect x="1068" y="830" width="10" height="5" fill="#c8c8d4" stroke="#111" stroke-width="1" /><rect x="1069.5" y="831" width="2.0" height="3" fill="#f0f0f8" stroke="none" stroke-width="1" /><rect x="1070.5" y="835" width="5.0" height="3" fill="#e0d818" stroke="none" stroke-width="1" /><rect x="1068" y="838" width="10" height="6" fill="#dcdce6" stroke="#111" stroke-width="1" /><rect x="1071.5" y="839" width="4.0" height="4" fill="#f4f4f8" stroke="none" stroke-width="1" /><path d="M1059.5 846 Q1059.5 844 1063.5 844 H1082.5 Q1086.5 844 1086.5 846 V851.5 H1059.5Z" fill="url(#gfoot)" stroke="#111" stroke-width="1"/><line x1="1059.5" y1="847.5" x2="1086.5" y2="847.5" stroke="#111" stroke-width="1" /><line x1="1059.5" y1="850.5" x2="1086.5" y2="850.5" stroke="#111" stroke-width="1" /><rect x="1060.5" y="851.5" width="25.0" height="3.5" fill="url(#gring)" stroke="#111" stroke-width="1" /><rect x="1060" y="833" width="10" height="5" fill="#c8c8d4" stroke="#111" stroke-width="1" /><rect x="1061.5" y="834" width="2.0" height="3" fill="#f0f0f8" stroke="none" stroke-width="1" /><rect x="1062.5" y="838" width="5.0" height="3" fill="#e0d818" stroke="none" stroke-width="1" /><rect x="1060" y="841" width="10" height="6" fill="#dcdce6" stroke="#111" stroke-width="1" /><rect x="1063.5" y="842" width="4.0" height="4" fill="#f4f4f8" stroke="none" stroke-width="1" /><path d="M1051.5 849 Q1051.5 847 1055.5 847 H1074.5 Q1078.5 847 1078.5 849 V854.5 H1051.5Z" fill="url(#gfoot)" stroke="#111" stroke-width="1"/><line x1="1051.5" y1="850.5" x2="1078.5" y2="850.5" stroke="#111" stroke-width="1" /><line x1="1051.5" y1="853.5" x2="1078.5" y2="853.5" stroke="#111" stroke-width="1" /><rect x="1052.5" y="854.5" width="25.0" height="3.5" fill="url(#gring)" stroke="#111" stroke-width="1" /><rect x="914" y="826" width="10" height="4" fill="#e0e0ea" stroke="#111" stroke-width="0.8" /><path d="M905.5 832 Q905.5 830 909.5 830 H928.5 Q932.5 830 932.5 832 V837.5 H905.5Z" fill="url(#gfoot)" stroke="#111" stroke-width="1"/><line x1="905.5" y1="833.5" x2="932.5" y2="833.5" stroke="#111" stroke-width="1" /><line x1="905.5" y1="836.5" x2="932.5" y2="836.5" stroke="#111" stroke-width="1" /><rect x="906.5" y="837.5" width="25.0" height="3.5" fill="url(#gring)" stroke="#111" stroke-width="1" /><path d="M945 504 L1033 510 L1033 515 L945 510Z" fill="#ff10ff"/><path d="M1000 509 L1033 511 L1033 514 L1000 512Z" fill="#8a1090"/><line x1="1035" y1="501" x2="1035" y2="513" stroke="#fff" stroke-width="1.5" /><line x1="1030" y1="513" x2="1045" y2="513" stroke="#fff" stroke-width="1.5" /><defs><linearGradient id="gor" x1="0" x2="0" y1="0" y2="1"><stop offset="0" stop-color="#f6a02a"/><stop offset="1" stop-color="#ee7a1c"/></linearGradient></defs><g fill="none" stroke="url(#gor)" stroke-width="2"><path d="M892 517 V538 H935 V517"/><path d="M897 512 V532 Q905 533 912 537 Q920 533 929 532 V512"/><path d="M901 508 V528 M931 508 V528"/></g><path d="M906 517 Q910 510 917 511 Q922 514 919 522 Q915 530 913 536 Q924 528 925 520" fill="none" stroke="#f5a820" stroke-width="3"/><text x="946" y="530" font-size="18" font-family="Liberation Sans" fill="url(#gor)" stroke="#ee7a1c" stroke-width=".3" textLength="83" lengthAdjust="spacingAndGlyphs">智造资料网</text><text x="947" y="538.5" font-size="5" font-family="Liberation Sans" font-weight="bold" fill="#ee7a1c" textLength="82" lengthAdjust="spacingAndGlyphs">INTELLIGENT MANUFACTURING DATA</text></svg></body></html>
